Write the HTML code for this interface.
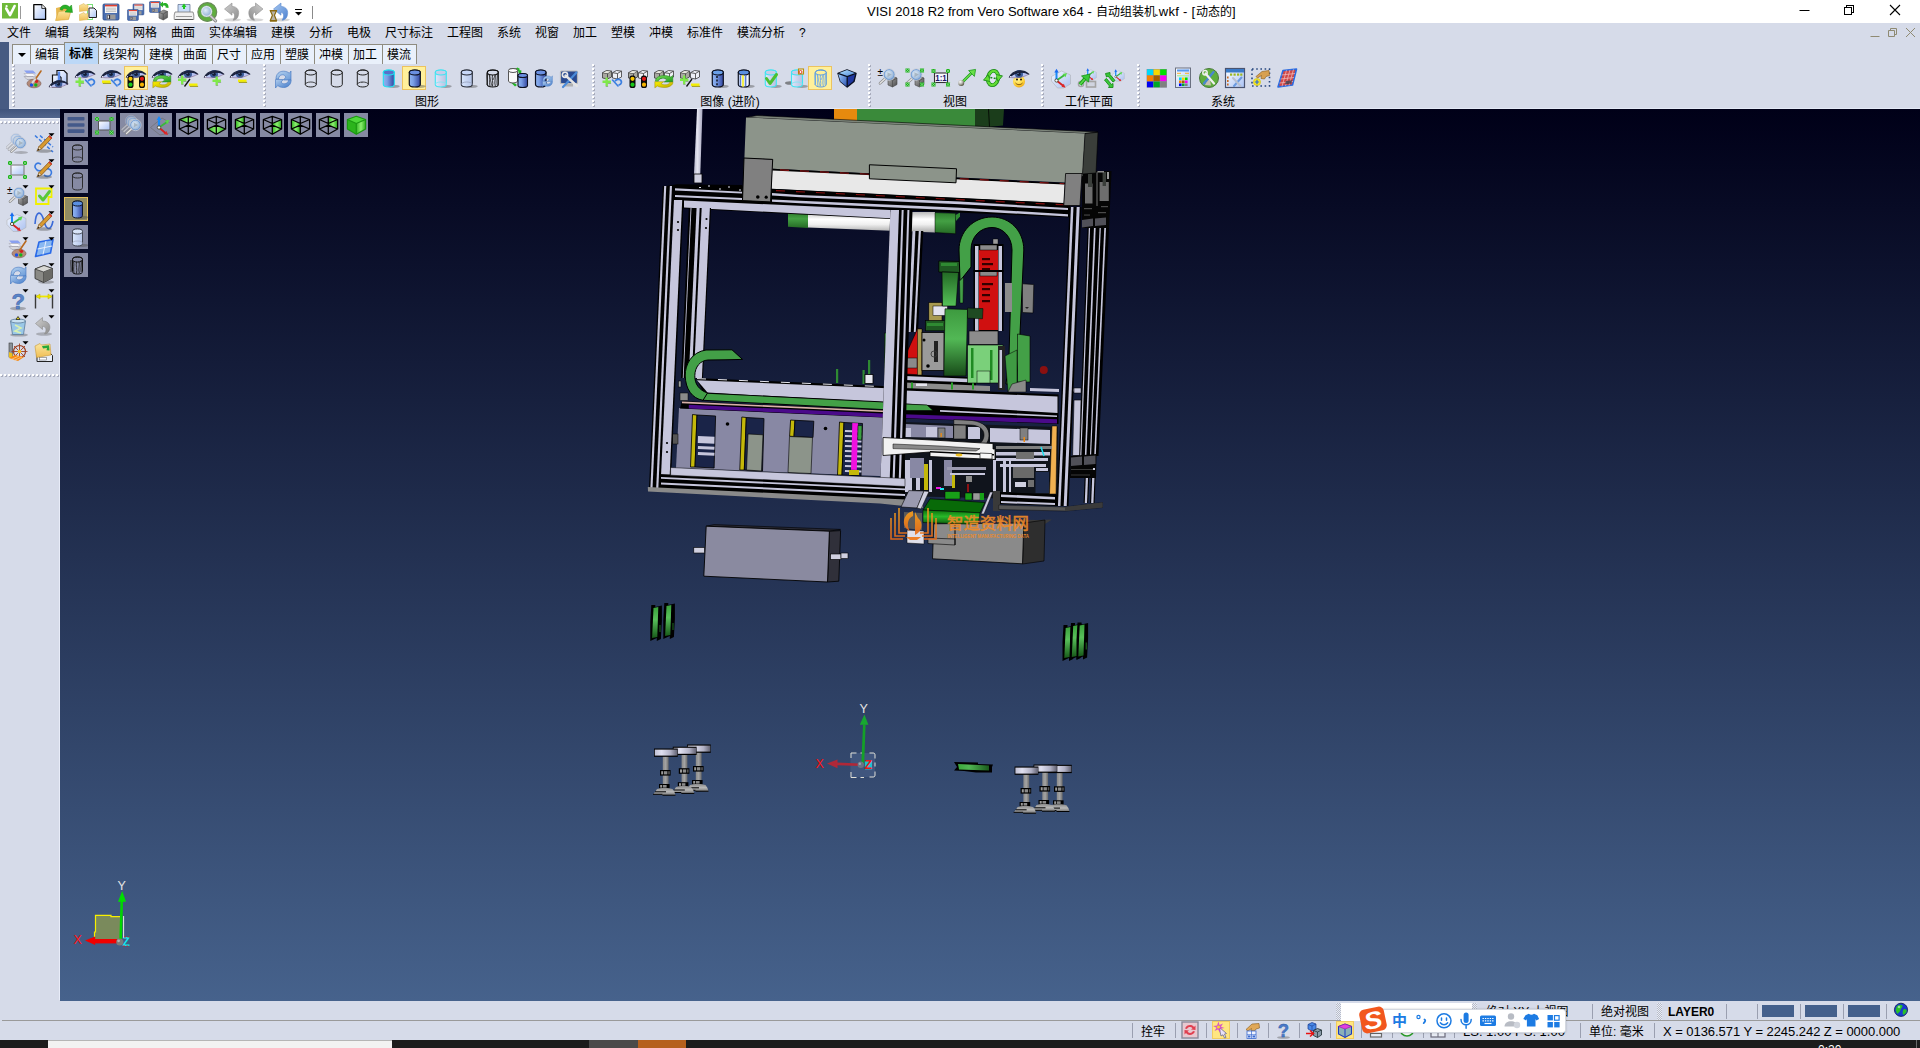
<!DOCTYPE html>
<html lang="zh-CN">
<head>
<meta charset="utf-8">
<title>VISI 2018 R2 from Vero Software x64 - 自动组装机.wkf - [动态的]</title>
<style>
*{box-sizing:border-box;margin:0;padding:0}
html,body{width:1920px;height:1048px;overflow:hidden;background:#d6dbe9}
body{position:relative;font-family:"Liberation Sans","Noto Sans CJK SC",sans-serif;font-size:12px;color:#000;line-height:1}
.abs{position:absolute}
#titlebar{position:absolute;left:0;top:0;width:1920px;height:23px;background:#fff}
#title{position:absolute;left:867px;top:4px;width:380px;height:16px;font-size:13px;line-height:16px;white-space:nowrap;color:#000}
#title span{display:inline-block;vertical-align:top}
#menubar{position:absolute;left:0;top:23px;width:1920px;height:20px;background:#d6dbe9}
#menubar span{position:absolute;top:3px;height:14px;line-height:14px;font-size:12px;white-space:nowrap}
#tabs{position:absolute;left:0;top:42px;width:1920px;height:22px}
.tab{position:absolute;top:2px;height:20px;background:#e9f0fb;border:1px solid #8f8c80;border-bottom:none;font-size:12px;line-height:20px;text-align:center;white-space:nowrap}
.tab.on{top:0;height:22px;background:#bcd8f7;font-weight:bold;line-height:22px}
#toolbar{position:absolute;left:12px;top:64px;width:1908px;height:44px;background:#d6dbe9}
.grip{position:absolute;top:64px;width:3px;height:44px;background:linear-gradient(#fff,#fff) 0 0/2px 2px repeat-y,linear-gradient(#a8acbc,#a8acbc) 1px 1px/2px 2px repeat-y;background-size:2px 2px,2px 2px;background-repeat:no-repeat;background-image:repeating-linear-gradient(to bottom,#fff 0 2px,transparent 2px 4px),repeating-linear-gradient(to bottom,transparent 0 1px,#a8acbc 1px 3px,transparent 3px 4px);background-size:2px 100%,2px 100%;background-position:0 0,1px 0}
.tl{position:absolute;top:96px;height:13px;line-height:13px;font-size:12px;white-space:nowrap;transform:translateX(-50%)}
.ic{position:absolute;width:24px;height:24px}
.hl{position:absolute;width:24px;height:24px;background:#fff09a;border:1px solid #ecc35f}
#leftstrip{position:absolute;left:0;top:42px;width:9px;height:67px;background:#465a82}
#leftband{position:absolute;left:0;top:109px;width:60px;height:9px;background:linear-gradient(#3f537c,#52668d)}
#leftpanel{position:absolute;left:0;top:118px;width:60px;height:883px;background:#d6dbe9}
.hgrip{position:absolute;left:0px;width:59px;height:3px;background-repeat:no-repeat;background-image:repeating-linear-gradient(to right,#fff 0 2px,transparent 2px 4px),repeating-linear-gradient(to right,transparent 0 1px,#a8acbc 1px 3px,transparent 3px 4px);background-size:100% 2px,100% 2px;background-position:0 0,0 1px}
#viewport{position:absolute;left:60px;top:109px;width:1860px;height:892px;background:linear-gradient(to bottom,#000018 0%,#46628c 100%);overflow:hidden}
.vb{position:absolute;width:24px;height:24px;background:#868aa3}
.vb.on{background:#928c62;border:1px solid #e6c25c}
#status{position:absolute;left:0;top:1001px;width:1920px;height:39px;background:#d6dbe9}
#status .line{position:absolute;left:2px;top:19px;width:1918px;height:1px;background:#9a9a9a}
#taskbar{position:absolute;left:0;top:1040px;width:1920px;height:8px;background:#1c1c1c}
.st{position:absolute;font-size:12px;line-height:14px;height:14px;white-space:nowrap}
.vsep{position:absolute;width:1px;background:#9a9fb0}
</style>
</head>
<body>
<div id="titlebar"></div>
<svg class="abs" style="left:0;top:0;width:320px;height:23px" viewBox="0 0 320 23"><rect x="2" y="3" width="16" height="15.5" fill="#6fba3a"/><path d="M6.2 8.5 L10 15.2 L14.6 6" stroke="#fff" stroke-width="2.6" fill="none" stroke-linecap="round" stroke-linejoin="round"/><circle cx="6.6" cy="6.2" r="1.1" fill="#fff"/><path d="M20.5 6v13" stroke="#9a9a9a" stroke-width="1"/><path d="M33.8 4.6h8l3.8 3.8v11H33.8z" fill="url(#gDoc)" stroke="#000" stroke-width="1.3" stroke-linejoin="round"/><path d="M41.8 4.6v3.8h3.8" fill="#fff" stroke="#000" stroke-width=".8"/><path d="M56 8 L62 6.5 L63.5 8 L70 7.5 L69 19 L56.5 20.5z" fill="#e8b850"/><path d="M55.5 20.5 L58.5 11.5 L71 10.5 L68.5 19.5z" fill="url(#gFold)" stroke="#d8a840" stroke-width=".6"/><path d="M60 9.5 C60.5 5 66 3.5 69.5 7 L71.5 5 L72.5 12.5 L65 12 L67.3 9.7 C65.5 8 63 8 62.3 10.2z" fill="#28b028" stroke="#188a18" stroke-width=".5"/><rect x="87.5" y="4.5" width="5" height="15" fill="none" stroke="#7ae07a" stroke-width="1"/><path d="M79.5 5.5 L84 3.5 L85 5 L88 4.5 L88 10.5 L79.5 11.5z" fill="url(#gFold)" stroke="#d8b050" stroke-width=".5"/><path d="M79.5 14.5 L84 12.5 L85 14 L88 13.5 L88 19.5 L79.5 20.5z" fill="url(#gFold)" stroke="#d8b050" stroke-width=".5"/><path d="M89 8h5l2.5 2.5v7H89z" fill="url(#gDoc)" stroke="#222" stroke-width="1"/><g transform="translate(103,4) scale(1)"><rect x="0" y="0" width="16" height="16" rx="1.2" fill="#4a6eb0" stroke="#2a4a88" stroke-width=".8"/><rect x="2" y="0.8" width="12" height="8.2" fill="#f4f4f4"/><rect x="2" y="0.8" width="12" height="1.6" fill="#e04030"/><path d="M3 4.2h10M3 5.8h10M3 7.4h10" stroke="#b8b8b8" stroke-width=".8"/><rect x="3.5" y="10.5" width="9" height="5" fill="#9a9a9a"/><rect x="4.5" y="11" width="2.6" height="4" fill="#2a2a3a"/><rect x="4.8" y="11.5" width="1.2" height="3" fill="#e8e8e8"/></g><g transform="translate(133,4) scale(0.68)"><rect x="0" y="0" width="16" height="16" rx="1.2" fill="#4a6eb0" stroke="#2a4a88" stroke-width=".8"/><rect x="2" y="0.8" width="12" height="8.2" fill="#f4f4f4"/><rect x="2" y="0.8" width="12" height="1.6" fill="#e04030"/><path d="M3 4.2h10M3 5.8h10M3 7.4h10" stroke="#b8b8b8" stroke-width=".8"/><rect x="3.5" y="10.5" width="9" height="5" fill="#9a9a9a"/><rect x="4.5" y="11" width="2.6" height="4" fill="#2a2a3a"/><rect x="4.8" y="11.5" width="1.2" height="3" fill="#e8e8e8"/></g><g transform="translate(127.5,9.5) scale(0.68)"><rect x="0" y="0" width="16" height="16" rx="1.2" fill="#4a6eb0" stroke="#2a4a88" stroke-width=".8"/><rect x="2" y="0.8" width="12" height="8.2" fill="#f4f4f4"/><rect x="2" y="0.8" width="12" height="1.6" fill="#e04030"/><path d="M3 4.2h10M3 5.8h10M3 7.4h10" stroke="#b8b8b8" stroke-width=".8"/><rect x="3.5" y="10.5" width="9" height="5" fill="#9a9a9a"/><rect x="4.5" y="11" width="2.6" height="4" fill="#2a2a3a"/><rect x="4.8" y="11.5" width="1.2" height="3" fill="#e8e8e8"/></g><g transform="translate(149.5,1.5) scale(0.68)"><rect x="0" y="0" width="16" height="16" rx="1.2" fill="#4a6eb0" stroke="#2a4a88" stroke-width=".8"/><rect x="2" y="0.8" width="12" height="8.2" fill="#f4f4f4"/><rect x="2" y="0.8" width="12" height="1.6" fill="#e04030"/><path d="M3 4.2h10M3 5.8h10M3 7.4h10" stroke="#b8b8b8" stroke-width=".8"/><rect x="3.5" y="10.5" width="9" height="5" fill="#9a9a9a"/><rect x="4.5" y="11" width="2.6" height="4" fill="#2a2a3a"/><rect x="4.8" y="11.5" width="1.2" height="3" fill="#e8e8e8"/></g><g transform="translate(159,10) scale(0.95)"><use href="#gcube"/></g><path d="M163 3.5 C166 2 169 4 168.5 8 L165.5 7.5 C166 6 165 5 163 5.8 L163 7.5 L159.5 4.5 L163 1.5z" fill="#28b028"/><path d="M178 4.5h12v8h-12z" fill="#c8dcf8" stroke="#5a6a8a" stroke-width=".7"/><path d="M181.5 7 L184 3.5 L186.5 7 L185 7 L185 9 L183 9 L183 7z" fill="#20c820"/><path d="M175 12h18l.8 3v4.5h-19.6V15z" fill="#f0f0f0" stroke="#7a7a7a" stroke-width=".8"/><path d="M176 16.5h16" stroke="#9a9a9a" stroke-width="1"/><path d="M175 19.5h18" stroke="#5a5a5a" stroke-width="1"/><circle cx="207.3" cy="12" r="9.4" fill="#5fae3e" stroke="#6a8a5a" stroke-width="1.2"/><path d="M209 14.5 L215.5 20.8" stroke="#8a8a8a" stroke-width="3.2" stroke-linecap="round"/><path d="M209 14.5 L215.5 20.8" stroke="#d0d0d0" stroke-width="1.6" stroke-linecap="round"/><circle cx="206.6" cy="11.4" r="5" fill="url(#gLens)" stroke="#e4e8f0" stroke-width="1.3"/><circle cx="206.6" cy="11.4" r="5.8" fill="none" stroke="#7a9a8a" stroke-width=".5"/><g transform="translate(224.5,3)"><ellipse cx="8" cy="16.8" rx="8.5" ry="1.6" fill="#000" opacity=".16"/><path d="M0 6 L7.5 0 L7.5 3.4 C13 3.6 15.5 8 13.5 13.5 C12.5 16 10.5 17.2 8.5 17.2 C11 13.5 10.5 9.6 7.5 9.2 L7.5 12.2z" fill="url(#gArrG)" stroke="#8e8e8e" stroke-width=".6"/></g><g transform="translate(263,3) scale(-1,1)"><ellipse cx="8" cy="16.8" rx="8.5" ry="1.6" fill="#000" opacity=".16"/><path d="M0 6 L7.5 0 L7.5 3.4 C13 3.6 15.5 8 13.5 13.5 C12.5 16 10.5 17.2 8.5 17.2 C11 13.5 10.5 9.6 7.5 9.2 L7.5 12.2z" fill="url(#gArrG)" stroke="#8e8e8e" stroke-width=".6"/></g><g transform="translate(273.5,3)"><ellipse cx="8" cy="16.8" rx="8.5" ry="1.6" fill="#000" opacity=".16"/><path d="M0 6 L7.5 0 L7.5 3.4 C13 3.6 15.5 8 13.5 13.5 C12.5 16 10.5 17.2 8.5 17.2 C11 13.5 10.5 9.6 7.5 9.2 L7.5 12.2z" fill="url(#gArrB)" stroke="#5a8ad0" stroke-width=".6"/></g><path d="M270.2 10.6h6.4l-2.2 4.6 2.2 5.6h-6.4l2.2-5.6z" fill="#b8b4a8" stroke="#8a6a10" stroke-width="1.2" stroke-linejoin="round"/><path d="M270 10.6h6.8M270 20.8h6.8" stroke="#8a6a10" stroke-width="1.4"/><path d="M295 9.5h7" stroke="#000" stroke-width="1"/><path d="M295 12h7l-3.5 3.5z" fill="#000"/><path d="M312.5 6v13" stroke="#8a8a8a" stroke-width="1"/></svg>
<div id="title"><span id="t1" style="width:229px">VISI 2018 R2 from Vero Software x64 - </span><span id="t2" style="font-size:12px;width:59px">自动组装机</span><span id="t3" style="width:41px;letter-spacing:.25px">.wkf - [</span><span id="t4" style="font-size:12px">动态的</span><span id="t5">]</span></div>
<svg class="abs" style="left:1780px;top:0;width:140px;height:23px" viewBox="0 0 140 23">
<path d="M19.5 10.5h10" stroke="#000" stroke-width="1" fill="none"/>
<path d="M64.5 7.5h7v7h-7z M66.5 7.5v-2h7v7h-2" stroke="#000" stroke-width="1" fill="none" shape-rendering="crispEdges"/>
<path d="M110 5l10 10M120 5l-10 10" stroke="#000" stroke-width="1.1" fill="none"/>
</svg>
<div id="menubar">
<span style="left:7px">文件</span>
<span style="left:45px">编辑</span>
<span style="left:83px">线架构</span>
<span style="left:133px">网格</span>
<span style="left:171px">曲面</span>
<span style="left:209px">实体编辑</span>
<span style="left:271px">建模</span>
<span style="left:309px">分析</span>
<span style="left:347px">电极</span>
<span style="left:385px">尺寸标注</span>
<span style="left:447px">工程图</span>
<span style="left:497px">系统</span>
<span style="left:535px">视窗</span>
<span style="left:573px">加工</span>
<span style="left:611px">塑模</span>
<span style="left:649px">冲模</span>
<span style="left:687px">标准件</span>
<span style="left:737px">模流分析</span>
<span style="left:799px">?</span>
</div>
<svg class="abs" style="left:1860px;top:23px;width:60px;height:20px" viewBox="0 0 60 20">
<path d="M10.5 13.5h9" stroke="#8f8a72" stroke-width="1" fill="none"/>
<path d="M28.5 7.5h6v6h-6z M30.5 7.5v-2h6v6h-2" stroke="#8f8a72" stroke-width="1" fill="none"/>
<path d="M46 5l9 9M55 5l-9 9" stroke="#8f8a72" stroke-width="1" fill="none"/>
</svg>
<div id="tabs">
<div class="tab" style="left:12px;width:19px"><svg width="8" height="4" viewBox="0 0 8 4" style="position:absolute;left:5px;top:8px"><path d="M0 0h8l-4 4z" fill="#000"/></svg></div>
<div class="tab" style="left:30px;width:35px;padding-right:1px">编辑</div>
<div class="tab on" style="left:64px;width:35px;padding-right:1px">标准</div>
<div class="tab" style="left:98px;width:47px;padding-right:1px">线架构</div>
<div class="tab" style="left:144px;width:35px;padding-right:1px">建模</div>
<div class="tab" style="left:178px;width:35px;padding-right:1px">曲面</div>
<div class="tab" style="left:212px;width:35px;padding-right:1px">尺寸</div>
<div class="tab" style="left:246px;width:35px;padding-right:1px">应用</div>
<div class="tab" style="left:280px;width:35px;padding-right:1px">塑膜</div>
<div class="tab" style="left:314px;width:35px;padding-right:1px">冲模</div>
<div class="tab" style="left:348px;width:35px;padding-right:1px">加工</div>
<div class="tab" style="left:382px;width:35px;padding-right:1px">模流</div>
</div>
<div id="toolbar"></div>
<div class="abs" style="left:0;top:108px;width:1920px;height:1px;background:#e4e9f6"></div>
<div class="grip" style="left:12px"></div>
<div class="grip" style="left:263px"></div>
<div class="grip" style="left:592px"></div>
<div class="grip" style="left:868px"></div>
<div class="grip" style="left:1041px"></div>
<div class="grip" style="left:1137px"></div>
<div class="tl" style="left:136.5px">属性/过滤器</div>
<div class="tl" style="left:427px">图形</div>
<div class="tl" style="left:730px">图像 (进阶)</div>
<div class="tl" style="left:955px">视图</div>
<div class="tl" style="left:1089px">工作平面</div>
<div class="tl" style="left:1223px">系统</div>
<div class="hl" style="left:124px;top:66px"></div>
<div class="hl" style="left:402px;top:66px"></div>
<div class="hl" style="left:808px;top:66px"></div>
<svg width="0" height="0" style="position:absolute">
<defs>
<linearGradient id="gCylB" x1="0" x2="1" y1="0" y2="0"><stop offset="0" stop-color="#8fb4f0"/><stop offset="0.35" stop-color="#7a9fe6"/><stop offset="1" stop-color="#3346a0"/></linearGradient>
<linearGradient id="gCylL" x1="0" x2="1" y1="0" y2="0"><stop offset="0" stop-color="#dfe6fa"/><stop offset="1" stop-color="#b9c0e0"/></linearGradient>
<linearGradient id="gCylW" x1="0" x2="1" y1="0" y2="0"><stop offset="0" stop-color="#d8e6fc"/><stop offset="1" stop-color="#b4c4e8"/></linearGradient>
<linearGradient id="gDoc" x1="0" x2="1" y1="0" y2="1"><stop offset="0" stop-color="#ffffff"/><stop offset="1" stop-color="#a9c2f5"/></linearGradient>
<linearGradient id="gFold" x1="0" x2="0" y1="0" y2="1"><stop offset="0" stop-color="#fbe6a0"/><stop offset="1" stop-color="#f0bf55"/></linearGradient>
<linearGradient id="gGray" x1="0" x2="1" y1="0" y2="1"><stop offset="0" stop-color="#b0b0b0"/><stop offset="1" stop-color="#4a4a4a"/></linearGradient>
<linearGradient id="gBlueA" x1="0" x2="1" y1="0" y2="1"><stop offset="0" stop-color="#b8d4f0"/><stop offset="1" stop-color="#6a9ad8"/></linearGradient><linearGradient id="gBlueB" x1="0" x2="1" y1="0" y2="1"><stop offset="0" stop-color="#b0ccec"/><stop offset="1" stop-color="#3f78c8"/></linearGradient>
<linearGradient id="gGrn" x1="0" x2="1" y1="0" y2="1"><stop offset="0" stop-color="#7be35a"/><stop offset="1" stop-color="#1e9a1e"/></linearGradient>
<linearGradient id="gGrn2" x1="0" x2="1" y1="0" y2="0"><stop offset="0" stop-color="#34b424"/><stop offset=".5" stop-color="#8cf070"/><stop offset="1" stop-color="#2cac1c"/></linearGradient><linearGradient id="gArrG" x1="0" x2="1" y1="0" y2="1"><stop offset="0" stop-color="#d0d0d0"/><stop offset="1" stop-color="#8c8c8c"/></linearGradient><linearGradient id="gArrB" x1="0" x2="1" y1="0" y2="1"><stop offset="0" stop-color="#a8c8f0"/><stop offset="1" stop-color="#4a80d0"/></linearGradient><linearGradient id="gYel" x1="0" x2="1" y1="0" y2="1"><stop offset="0" stop-color="#fff200"/><stop offset="1" stop-color="#b8a800"/></linearGradient>
<linearGradient id="gPlane" x1="0" x2="1" y1="0" y2="1"><stop offset="0" stop-color="#f4f7ff"/><stop offset="1" stop-color="#a9c0f0"/></linearGradient>
<radialGradient id="gLens" cx="0.4" cy="0.4" r="0.7"><stop offset="0" stop-color="#e0ecf8"/><stop offset="1" stop-color="#86a8d0"/></radialGradient>
<radialGradient id="gBall" cx="0.35" cy="0.3" r="0.8"><stop offset="0" stop-color="#ffffff"/><stop offset="0.5" stop-color="#b0b0a8"/><stop offset="1" stop-color="#3a3a20"/></radialGradient>
<radialGradient id="gSmile" cx="0.4" cy="0.3" r="0.8"><stop offset="0" stop-color="#fff7a0"/><stop offset="0.6" stop-color="#ffd63a"/><stop offset="1" stop-color="#e89a10"/></radialGradient>
<linearGradient id="gCubeT" x1="0" x2="1" y1="0" y2="1"><stop offset="0" stop-color="#b4e4ff"/><stop offset="1" stop-color="#4a84d8"/></linearGradient><linearGradient id="gCubeB" x1="0" x2="1" y1="0" y2="1"><stop offset="0" stop-color="#9fd0ff"/><stop offset="1" stop-color="#2a50b0"/></linearGradient>
<g id="eye"><path d="M0.3 8.2 C4.5 2 13.5 1 19.7 5.2 C15 8.6 6 9.6 0.3 8.2z" fill="#b8c4f4"/><circle cx="10" cy="5" r="4" fill="#3c5c98"/><circle cx="10" cy="5.2" r="1.8" fill="#141e38"/><circle cx="9" cy="3.8" r="0.9" fill="#a8c8ff"/><path d="M0.3 8.2 C4 1.4 13.5 -0.4 19.8 5.2 C14.5 1.8 6.5 2.8 0.3 8.2z" fill="#1b233e" stroke="#1b233e" stroke-width="1.1" stroke-linejoin="round"/><path d="M0.3 8.2 C6 9.5 14 8.8 19.7 5.2" stroke="#8a6a8a" stroke-width="0.6" fill="none"/><circle cx="1.6" cy="7.6" r=".7" fill="#fff"/></g>
<g id="plus"><path d="M3 0h2.4v3h3v2.4h-3v3H3v-3H0V3h3z" fill="#7fe84a"/><path d="M5.4 5.4h3.2v0.9H5.4zM3.2 8.4h2.4v0.8H3.2z" fill="#5a8a3a" opacity=".7"/></g>
<g id="minus"><rect x="0" y="0" width="8.5" height="2.4" fill="#f5f000"/><rect x="0.8" y="2.4" width="8.3" height="0.9" fill="#9a9400"/></g>
<g id="undoB"><path d="M0.5 0.5 L6 6.5" stroke="#3b7fe0" stroke-width="1.6" stroke-linecap="round" fill="none"/><path d="M3.5 1.2 C6 -1.5 10 0 9.3 3.4 C9 4.6 8 5.2 7.2 5.3" stroke="#3b7fe0" stroke-width="1.8" fill="none" stroke-linecap="round"/></g>
<g id="tl"><rect x="0" y="0" width="6" height="12.5" rx="2.6" fill="#0a0a0a"/></g>
<g id="refreshGY"><path d="M5 13 C5 8 8 5.2 12.5 5.2 C15 5.2 17 6 18.3 7.2 L20 5 L20 14 L12.5 14 L14.8 11.2 C14 9.5 13 8.8 11.5 8.8 C9 8.8 7.8 10.5 7.5 13z" fill="url(#gGrn)" stroke="#1c7a1c" stroke-width="0.5"/><path d="M20.2 14.2 C20 18.5 17 21.5 12.5 21.5 C10 21.5 8 20.8 6.8 19.5 L4.5 22 L4.5 13.5 L12.3 13.5 L10 16 C10.8 17.3 12 17.8 13.2 17.8 C15.8 17.8 17.2 16.2 17.5 14.2z" fill="url(#gYel)" stroke="#9a8a00" stroke-width="0.5"/></g>
<g id="refreshB"><path d="M5 13 C5 8 8 5.2 12.5 5.2 C15 5.2 17 6 18.3 7.2 L20 5 L20 14 L12.5 14 L14.8 11.2 C14 9.5 13 8.8 11.5 8.8 C9 8.8 7.8 10.5 7.5 13z" fill="url(#gBlueA)" stroke="#3f74c0" stroke-width="0.6"/><path d="M20.2 14.2 C20 18.5 17 21.5 12.5 21.5 C10 21.5 8 20.8 6.8 19.5 L4.5 22 L4.5 13.5 L12.3 13.5 L10 16 C10.8 17.3 12 17.8 13.2 17.8 C15.8 17.8 17.2 16.2 17.5 14.2z" fill="url(#gBlueB)" stroke="#3f74c0" stroke-width="0.6"/></g>
<g id="cubes"><path d="M0.5 3.2 L4.5 1 L9.5 1.6 L9.5 7.5 L5.5 9.5 L0.5 8.5z" fill="#a8a8a0" stroke="#3a3a3a" stroke-width="0.8"/><path d="M0.5 3.2 L5.5 4 L9.5 1.6 M5.5 4 V9.5" stroke="#3a3a3a" stroke-width="0.8" fill="none"/><path d="M1.2 3.3 L4.6 1.4 L8.8 1.9 L5.5 3.7z" fill="#e8e8e0"/><path d="M10.5 3.2 L14.5 1 L19.5 1.6 L19.5 7.5 L15.5 9.5 L10.5 8.5z" fill="#eef0f6" stroke="#3a3a3a" stroke-width="0.8"/><path d="M10.5 3.2 L15.5 4 L19.5 1.6 M15.5 4 V9.5" stroke="#3a3a3a" stroke-width="0.8" fill="none"/></g>
<g id="mag"><path d="M7 9 L1 14.5" stroke="#8c8c8c" stroke-width="2.6" stroke-linecap="round"/><path d="M7 9 L1 14.5" stroke="#e6e6e6" stroke-width="1.2" stroke-linecap="round"/><circle cx="10" cy="6" r="5" fill="url(#gLens)" stroke="#6a9ad8" stroke-width="1"/><circle cx="10" cy="6" r="5.7" fill="none" stroke="#c9ccd4" stroke-width="0.7"/><path d="M8.3 3.6 L12.6 6 L8.3 8.6z" fill="#9aa8b4" opacity=".75"/></g>
<g id="gcorner"><path d="M0 0h4v4h-4z" fill="#22b022"/><path d="M0 0l4 4M4 0l-4 4" stroke="#8fe08f" stroke-width="0.7"/></g>
<g id="gcube"><path d="M0 2.5 L5 0 L9 1.5 L9 8 L4.5 10.5 L0 8.5z" fill="url(#gGray)" stroke="#444" stroke-width="0.6"/><path d="M0 2.5 L4.5 4.2 L9 1.5 M4.5 4.2 V10.5" stroke="#444" stroke-width="0.6" fill="none"/></g>
</defs></svg>
<svg class="ic" style="left:21px;top:66px;width:24px;height:24px" viewBox="0 0 24 24"><path d="M3 4.5h9l3 3H6z" fill="#8aa0f0"/><path d="M3 7.5h9l3 3H6z" fill="#f4f4f8" stroke="#9a9aa8" stroke-width=".5"/><path d="M3 10.5h9l3 3H6z" fill="#d8d8de" stroke="#8a8a98" stroke-width=".5"/><ellipse cx="13" cy="17.5" rx="7" ry="4.3" fill="#b48a78" stroke="#7a5a50" stroke-width=".6"/><circle cx="15.5" cy="15.3" r="1.7" fill="#d02020"/><circle cx="10.5" cy="19" r="1.7" fill="#1a50e8"/><circle cx="14.8" cy="19" r="1.7" fill="#18b018"/><path d="M20 5 L13.5 14.5" stroke="#b86a20" stroke-width="1.6" stroke-linecap="round"/><path d="M14.2 13.2 L11.5 16.5" stroke="#d8d8d8" stroke-width="2" stroke-linecap="round"/></svg>
<svg class="ic" style="left:47px;top:66px;width:24px;height:24px" viewBox="0 0 24 24"><path d="M10 4.5h7l3 3v11H10z" fill="url(#gDoc)" stroke="#111" stroke-width="1.2"/><path d="M5.5 9h6l2.5 2.5v9.5H5.5z" fill="url(#gDoc)" stroke="#111" stroke-width="1.2"/><path d="M12 5.5v13h6" fill="none" stroke="#5a8ae8" stroke-width="2.4"/><g transform="translate(2,13) scale(0.95)"><use href="#eye"/></g></svg>
<svg class="ic" style="left:73px;top:66px;width:24px;height:24px" viewBox="0 0 24 24"><use href="#eye" x="2" y="3"/><use href="#plus" x="2.5" y="11.5"/><use href="#undoB" x="12" y="13.5"/></svg>
<svg class="ic" style="left:99px;top:66px;width:24px;height:24px" viewBox="0 0 24 24"><use href="#eye" x="2" y="3"/><use href="#minus" x="3" y="14.5"/><use href="#undoB" x="12" y="13.5"/></svg>
<svg class="ic" style="left:124px;top:66px;width:24px;height:24px" viewBox="0 0 24 24"><use href="#eye" x="2" y="3"/><use href="#tl" x="3.5" y="9.5"/><circle cx="6.5" cy="12.8" r="2.1" fill="#f5c400"/><circle cx="6.5" cy="18.7" r="2.1" fill="#18c818"/><use href="#tl" x="15" y="9.5"/><circle cx="18" cy="12.8" r="2.1" fill="#e01818"/><circle cx="18" cy="18.7" r="2.1" fill="#f5b400"/></svg>
<svg class="ic" style="left:150px;top:66px;width:24px;height:24px" viewBox="0 0 24 24"><use href="#eye" x="2" y="3"/><g transform="translate(-2.4,5.8) scale(1.16,0.73)"><use href="#refreshGY"/></g></svg>
<svg class="ic" style="left:176px;top:66px;width:24px;height:24px" viewBox="0 0 24 24"><use href="#eye" x="2" y="3"/><use href="#plus" x="2" y="9.5"/><path d="M8.5 20.5 L14 13" stroke="#111" stroke-width="1.3"/><use href="#minus" x="13" y="17.5"/></svg>
<svg class="ic" style="left:202px;top:66px;width:24px;height:24px" viewBox="0 0 24 24"><use href="#eye" x="2" y="3"/><use href="#plus" x="10.5" y="10.5"/></svg>
<svg class="ic" style="left:228px;top:66px;width:24px;height:24px" viewBox="0 0 24 24"><use href="#eye" x="2" y="3"/><use href="#minus" x="10" y="13.5"/></svg>
<svg class="ic" style="left:271px;top:66px;width:24px;height:24px" viewBox="0 0 24 24"><use href="#refreshB"/></svg>
<svg class="ic" style="left:298px;top:66px;width:24px;height:24px" viewBox="0 0 24 24"><path d="M7.3 6.5 V18.5 A5.5 2.5 0 0 0 18.3 18.5 V6.5 A5.5 2.5 0 0 0 7.3 6.5z" fill="none" stroke="#222" stroke-width="1"/><ellipse cx="12.8" cy="6.5" rx="5.5" ry="2.5" fill="none" stroke="#222" stroke-width="1"/><path d="M7.3 18.5 A5.5 2.5 0 0 1 18.3 18.5" fill="none" stroke="#222" stroke-width="0.8"/></svg>
<svg class="ic" style="left:324px;top:66px;width:24px;height:24px" viewBox="0 0 24 24"><path d="M7.3 6.5 V18.5 A5.5 2.5 0 0 0 18.3 18.5 V6.5 A5.5 2.5 0 0 0 7.3 6.5z" fill="none" stroke="#222" stroke-width="1"/><ellipse cx="12.8" cy="6.5" rx="5.5" ry="2.5" fill="none" stroke="#222" stroke-width="1"/></svg>
<svg class="ic" style="left:350px;top:66px;width:24px;height:24px" viewBox="0 0 24 24"><path d="M7.3 6.5 V18.5 A5.5 2.5 0 0 0 18.3 18.5 V6.5 A5.5 2.5 0 0 0 7.3 6.5z" fill="none" stroke="#222" stroke-width="1"/><ellipse cx="12.8" cy="6.5" rx="5.5" ry="2.5" fill="none" stroke="#222" stroke-width="1"/><path d="M7.3 18.5 A5.5 2.5 0 0 1 18.3 18.5" fill="none" stroke="#222" stroke-width="0.8"/><circle cx="12" cy="16.2" r="0.5" fill="#222"/></svg>
<svg class="ic" style="left:376px;top:66px;width:24px;height:24px" viewBox="0 0 24 24"><ellipse cx="17.8" cy="20.3" rx="6" ry="1.6" fill="#555" opacity=".45"/><path d="M7.3 6.5 V18.5 A5.5 2.5 0 0 0 18.3 18.5 V6.5 A5.5 2.5 0 0 0 7.3 6.5z" fill="url(#gCylB)" stroke="#1fe0f0" stroke-width="1.1"/><ellipse cx="12.8" cy="6.5" rx="5.5" ry="2.5" fill="#5a6fc8" stroke="#1fe0f0" stroke-width="1.1"/></svg>
<svg class="ic" style="left:402px;top:66px;width:24px;height:24px" viewBox="0 0 24 24"><ellipse cx="17.8" cy="20.3" rx="6" ry="1.6" fill="#555" opacity=".45"/><path d="M7.3 6.5 V18.5 A5.5 2.5 0 0 0 18.3 18.5 V6.5 A5.5 2.5 0 0 0 7.3 6.5z" fill="url(#gCylB)" stroke="#0c1020" stroke-width="1.2"/><ellipse cx="12.8" cy="6.5" rx="5.5" ry="2.5" fill="#6a8fe0" stroke="#0c1020" stroke-width="1.2"/></svg>
<svg class="ic" style="left:428px;top:66px;width:24px;height:24px" viewBox="0 0 24 24"><ellipse cx="17.8" cy="20.3" rx="6" ry="1.6" fill="#555" opacity=".45"/><path d="M7.3 6.5 V18.5 A5.5 2.5 0 0 0 18.3 18.5 V6.5 A5.5 2.5 0 0 0 7.3 6.5z" fill="url(#gCylL)" stroke="#3fe4f2" stroke-width="1.1"/><ellipse cx="12.8" cy="6.5" rx="5.5" ry="2.5" fill="#c8cce8" stroke="#3fe4f2" stroke-width="1.1"/><path d="M7.3 18.5 A5.5 2.5 0 0 1 18.3 18.5" fill="none" stroke="#7fe8f2" stroke-width="0.8800000000000001"/></svg>
<svg class="ic" style="left:454px;top:66px;width:24px;height:24px" viewBox="0 0 24 24"><ellipse cx="17.8" cy="20.3" rx="6" ry="1.6" fill="#555" opacity=".45"/><path d="M7.3 6.5 V18.5 A5.5 2.5 0 0 0 18.3 18.5 V6.5 A5.5 2.5 0 0 0 7.3 6.5z" fill="url(#gCylW)" stroke="#2a2e3a" stroke-width="1.1"/><ellipse cx="12.8" cy="6.5" rx="5.5" ry="2.5" fill="#c8d8f8" stroke="#2a2e3a" stroke-width="1.1"/><path d="M7.3 18.5 A5.5 2.5 0 0 1 18.3 18.5" fill="none" stroke="#9aa4c0" stroke-width="0.8800000000000001"/></svg>
<svg class="ic" style="left:480px;top:66px;width:24px;height:24px" viewBox="0 0 24 24"><path d="M7.3 6.5 V18.5 A5.5 2.5 0 0 0 18.3 18.5 V6.5 A5.5 2.5 0 0 0 7.3 6.5z" fill="none" stroke="#111" stroke-width="1.1"/><ellipse cx="12.8" cy="6.5" rx="5.5" ry="2.5" fill="none" stroke="#111" stroke-width="1.1"/><path d="M7 7 C6.5 11 7.5 15 7 19 M9.5 8.5 C10.5 12 9 15 10 20.5 M12.5 9 C11.5 13 13.5 16 12.5 20.5 M15 8.5 C16 12 14 16 15.3 20 M17.2 7 C17.8 11 16.5 15 17.2 19" stroke="#222" stroke-width="0.9" fill="none"/><path d="M9 8.3 L12 20 M15.5 8.5 L13 14" stroke="#222" stroke-width="0.7" fill="none"/></svg>
<svg class="ic" style="left:506px;top:66px;width:24px;height:24px" viewBox="0 0 24 24"><path d="M8 3.5 L11.5 1.5 L14 3 L13 4 L15.5 4.5 L15 8 L12 7 L13 6 L11.5 5z" fill="#22b822"/><path d="M4.5 16 L9 20.5 L11 19 L9 17.5z" fill="#22b822"/><path d="M2.5 4.5 V15.0 A4.5 2 0 0 0 11.5 15.0 V4.5 A4.5 2 0 0 0 2.5 4.5z" fill="#fafafa" stroke="#555" stroke-width="1"/><ellipse cx="7.0" cy="4.5" rx="4.5" ry="2" fill="#fff" stroke="#555" stroke-width="1"/><path d="M12 9.5 V19.5 A4.75 2 0 0 0 21.5 19.5 V9.5 A4.75 2 0 0 0 12 9.5z" fill="url(#gCylB)" stroke="#0c1020" stroke-width="1.1"/><ellipse cx="16.75" cy="9.5" rx="4.75" ry="2" fill="#6a8fe0" stroke="#0c1020" stroke-width="1.1"/></svg>
<svg class="ic" style="left:532px;top:66px;width:24px;height:24px" viewBox="0 0 24 24"><path d="M3.5 6.5 V18.5 A5.25 2.5 0 0 0 14.0 18.5 V6.5 A5.25 2.5 0 0 0 3.5 6.5z" fill="url(#gCylB)" stroke="#0c1020" stroke-width="1.2"/><ellipse cx="8.75" cy="6.5" rx="5.25" ry="2.5" fill="#6a8fe0" stroke="#0c1020" stroke-width="1.2"/><g transform="translate(7.6,6.6) scale(0.64)"><use href="#refreshB"/></g></svg>
<svg class="ic" style="left:558px;top:66px;width:24px;height:24px" viewBox="0 0 24 24"><rect x="2.5" y="5" width="17" height="12.5" rx="1" fill="#2a4a90" stroke="#b8b8b8" stroke-width="1.2"/><rect x="7" y="18" width="8" height="2.5" fill="#b0b0b0"/><path d="M5 21 L18.5 6.5" stroke="#4a8ad8" stroke-width="2.2" stroke-linecap="round"/><path d="M7.5 9.5 L19 20" stroke="#e4e4e4" stroke-width="2.4" stroke-linecap="round"/><circle cx="7" cy="8.8" r="2.6" fill="none" stroke="#e8e8e8" stroke-width="1.6"/></svg>
<svg class="ic" style="left:600px;top:66px;width:24px;height:24px" viewBox="0 0 24 24"><use href="#cubes" x="2" y="3.5"/><use href="#plus" x="2.5" y="11.5"/><use href="#undoB" x="12" y="13.5"/></svg>
<svg class="ic" style="left:626px;top:66px;width:24px;height:24px" viewBox="0 0 24 24"><use href="#cubes" x="2" y="3.5"/><use href="#tl" x="3.5" y="9.5"/><circle cx="6.5" cy="12.8" r="2.1" fill="#f5c400"/><circle cx="6.5" cy="18.7" r="2.1" fill="#18c818"/><use href="#tl" x="15" y="9.5"/><circle cx="18" cy="12.8" r="2.1" fill="#e01818"/><circle cx="18" cy="18.7" r="2.1" fill="#f5b400"/></svg>
<svg class="ic" style="left:652px;top:66px;width:24px;height:24px" viewBox="0 0 24 24"><use href="#cubes" x="2" y="3.5"/><g transform="translate(-2.4,5.8) scale(1.16,0.73)"><use href="#refreshGY"/></g></svg>
<svg class="ic" style="left:678px;top:66px;width:24px;height:24px" viewBox="0 0 24 24"><use href="#cubes" x="2" y="3.5"/><use href="#plus" x="2" y="9.5"/><path d="M8.5 20.5 L14 13" stroke="#111" stroke-width="1.3"/><use href="#minus" x="13" y="17.5"/></svg>
<svg class="ic" style="left:705px;top:66px;width:24px;height:24px" viewBox="0 0 24 24"><ellipse cx="17.8" cy="20.3" rx="6" ry="1.6" fill="#555" opacity=".45"/><path d="M7.3 6.5 V18.5 A5.5 2.5 0 0 0 18.3 18.5 V6.5 A5.5 2.5 0 0 0 7.3 6.5z" fill="url(#gCylB)" stroke="#0c1020" stroke-width="1.2"/><ellipse cx="12.8" cy="6.5" rx="5.5" ry="2.5" fill="#6a9fe8" stroke="#0c1020" stroke-width="1.2"/><path d="M12 10v10" stroke="#000" stroke-width="1.3" stroke-dasharray="2 1.6"/></svg>
<svg class="ic" style="left:731px;top:66px;width:24px;height:24px" viewBox="0 0 24 24"><ellipse cx="17.8" cy="20.3" rx="6" ry="1.6" fill="#555" opacity=".45"/><path d="M7.3 6.5 V18.5 A5.5 2.5 0 0 0 18.3 18.5 V6.5 A5.5 2.5 0 0 0 7.3 6.5z" fill="#f4f6ff" stroke="#0c1020" stroke-width="1.2"/><ellipse cx="12.8" cy="6.5" rx="5.5" ry="2.5" fill="#5a8fe0" stroke="#0c1020" stroke-width="1.2"/><rect x="8.6" y="9.2" width="1.6" height="11" fill="#5a7fd0"/><rect x="11.2" y="9.2" width="1.6" height="11.5" fill="#f5f020"/><rect x="13.8" y="9.2" width="1.6" height="11" fill="#5a7fd0"/></svg>
<svg class="ic" style="left:758px;top:66px;width:24px;height:24px" viewBox="0 0 24 24"><ellipse cx="17.8" cy="20.3" rx="6" ry="1.6" fill="#555" opacity=".45"/><path d="M7.3 6.5 V18.5 A5.5 2.5 0 0 0 18.3 18.5 V6.5 A5.5 2.5 0 0 0 7.3 6.5z" fill="url(#gCylL)" stroke="#3fe4f2" stroke-width="1.1"/><ellipse cx="12.8" cy="6.5" rx="5.5" ry="2.5" fill="#c8cce8" stroke="#3fe4f2" stroke-width="1.1"/><path d="M8.5 12.5 L12 17.5 L18.5 8.5" stroke="#4cc030" stroke-width="3" fill="none" stroke-linecap="round" stroke-linejoin="round"/></svg>
<svg class="ic" style="left:784px;top:66px;width:24px;height:24px" viewBox="0 0 24 24"><ellipse cx="6" cy="17" rx="5" ry="1.8" fill="#444" opacity=".6"/><ellipse cx="18.0" cy="20.3" rx="6" ry="1.6" fill="#555" opacity=".45"/><path d="M7.5 6.5 V18.5 A5.5 2.5 0 0 0 18.5 18.5 V6.5 A5.5 2.5 0 0 0 7.5 6.5z" fill="url(#gCylL)" stroke="#3fe4f2" stroke-width="1.1"/><ellipse cx="13.0" cy="6.5" rx="5.5" ry="2.5" fill="#c8cce8" stroke="#3fe4f2" stroke-width="1.1"/><path d="M7.5 18.5 A5.5 2.5 0 0 1 18.5 18.5" fill="none" stroke="#7fe8f2" stroke-width="0.8800000000000001"/><rect x="14.5" y="3" width="5" height="5" fill="#f8f0f0" stroke="#b8900a" stroke-width="1.1"/><circle cx="16.5" cy="6" r="1.5" fill="none" stroke="#e03010" stroke-width=".9"/></svg>
<svg class="ic" style="left:808px;top:66px;width:24px;height:24px" viewBox="0 0 24 24"><path d="M7.3 6.5 V18.5 A5.5 2.5 0 0 0 18.3 18.5 V6.5 A5.5 2.5 0 0 0 7.3 6.5z" fill="none" stroke="#5a9ae0" stroke-width="1"/><ellipse cx="12.8" cy="6.5" rx="5.5" ry="2.5" fill="none" stroke="#5a9ae0" stroke-width="1"/><path d="M7 7 C6.5 11 7.5 15 7 19 M9.5 8.5 C10.5 12 9 15 10 20.5 M12.5 9 C11.5 13 13.5 16 12.5 20.5 M15 8.5 C16 12 14 16 15.3 20 M17.2 7 C17.8 11 16.5 15 17.2 19" stroke="#6aa8e8" stroke-width="0.9" fill="none"/><path d="M9 8.3 L12 20 M15.5 8.5 L13 14" stroke="#6aa8e8" stroke-width="0.7" fill="none"/></svg>
<svg class="ic" style="left:835px;top:66px;width:24px;height:24px" viewBox="0 0 24 24"><path d="M3 7.4 L12 4 L21 7.4 L19 15.5 L12.2 21 L5.5 15.5z" fill="#2038a0" stroke="#0a1020" stroke-width="1.4" stroke-linejoin="round"/><path d="M3 7.4 L12 4 L21 7.4 L12.2 10.5z" fill="url(#gCubeT)"/><path d="M3 7.4 L12.2 10.5 L12.2 21 L5.5 15.5z" fill="url(#gCubeB)"/><path d="M3 7.4 L12.2 10.5 L21 7.4 M12.2 10.5 V21" stroke="#0a1020" stroke-width="1.3" fill="none"/></svg>
<svg class="ic" style="left:876px;top:66px;width:24px;height:24px" viewBox="0 0 24 24"><text x="1.6" y="9.6" font-family="Liberation Sans,sans-serif" font-size="10" fill="#000">±</text><use href="#gcube" x="12" y="10.5"/><g transform="translate(3,2.5) scale(1.02)"><use href="#mag"/></g></svg>
<svg class="ic" style="left:903px;top:66px;width:24px;height:24px" viewBox="0 0 24 24"><use href="#gcube" x="12" y="10.5"/><g transform="translate(3,2.5) scale(1.02)"><use href="#mag"/></g><use href="#gcorner" x="2.5" y="2.5"/><use href="#gcorner" x="17" y="2.5"/><use href="#gcorner" x="2.5" y="16.5"/><use href="#gcorner" x="17" y="16.5"/></svg>
<svg class="ic" style="left:929px;top:66px;width:24px;height:24px" viewBox="0 0 24 24"><rect x="5.5" y="7" width="13" height="9.5" fill="#f4f6ff" stroke="#333" stroke-width="1.1"/><use href="#gcorner" x="2.5" y="3"/><use href="#gcorner" x="17" y="3"/><use href="#gcorner" x="2.5" y="16.5"/><use href="#gcorner" x="17" y="16.5"/><text x="12" y="14.9" text-anchor="middle" font-family="Liberation Sans,sans-serif" font-size="8.6" font-weight="bold" fill="#20106a" textLength="11.5" lengthAdjust="spacingAndGlyphs">1:1</text></svg>
<svg class="ic" style="left:955px;top:66px;width:24px;height:24px" viewBox="0 0 24 24"><path d="M7 16.5 L17 6.5" stroke="#1c9a1c" stroke-width="2.6"/><path d="M7 16.5 L17 6.5" stroke="#6ae04a" stroke-width="1.2"/><path d="M13.6 4.6 L20.6 3.4 L19.4 10.4z" fill="#6ae04a" stroke="#1c9a1c" stroke-width=".8"/><circle cx="6.2" cy="17" r="3" fill="url(#gBall)"/></svg>
<svg class="ic" style="left:981px;top:66px;width:24px;height:24px" viewBox="0 0 24 24"><g transform="translate(1.2 1.2) scale(.9) rotate(12 12 12)"><ellipse cx="12" cy="12" rx="5.6" ry="8" fill="none" stroke="#1c8a1c" stroke-width="4.4"/><ellipse cx="12" cy="12" rx="5.6" ry="8" fill="none" stroke="#62dc34" stroke-width="2.6"/><path d="M13.5 7.5 L21.8 7.5 L18.2 14.5z" fill="#62dc34" stroke="#1c8a1c" stroke-width=".9"/><path d="M10.5 16.5 L2.2 16.5 L5.8 9.5z" fill="#62dc34" stroke="#1c8a1c" stroke-width=".9"/><ellipse cx="12" cy="12" rx="3.4" ry="5.8" fill="#dfe3f0"/><rect x="9" y="11.2" width="6" height="1.6" fill="#1c8a1c"/><rect x="11.2" y="10.2" width="1.6" height="3.6" fill="#dfe3f0"/></g></svg>
<svg class="ic" style="left:1007px;top:66px;width:24px;height:24px" viewBox="0 0 24 24"><circle cx="12" cy="15.5" r="6" fill="url(#gSmile)"/><circle cx="10" cy="13.6" r="1" fill="#201000"/><circle cx="14" cy="13.6" r="1" fill="#201000"/><path d="M8.5 17 C10.5 19.2 13.5 19.2 15.5 17" stroke="#6a3a00" stroke-width=".8" fill="none"/><use href="#eye" x="2" y="3"/></svg>
<svg class="ic" style="left:1050px;top:66px;width:24px;height:24px" viewBox="0 0 24 24"><g transform="translate(0.5,0.5) scale(1)"><path d="M1 10 L11 4.5 L20 8.5 L20 17.5 L13 21.5 L7 21.5 L1 14.5z" fill="url(#gPlane)" stroke="#aaa" stroke-width=".5"/><path d="M6 14 L14 8.5" stroke="#3ab83a" stroke-width="1.8"/><path d="M12 7.5 L16.5 6.5 L15 10.8z" fill="#5ad84a"/><path d="M6 14 L13 19.5" stroke="#d82020" stroke-width="1.8"/><path d="M11 20.3 L15 21.3 L13.3 17.2z" fill="#e02828"/><path d="M6 13.5 V5" stroke="#1a8af8" stroke-width="2"/><path d="M3.8 6 L6 2.2 L8.2 6z" fill="#1a6af0"/><circle cx="6" cy="14" r="1.6" fill="#fff" stroke="#3a3a20" stroke-width=".8"/></g></svg>
<svg class="ic" style="left:1076px;top:66px;width:24px;height:24px" viewBox="0 0 24 24"><g transform="translate(8,1) scale(0.62)"><path d="M1 10 L11 4.5 L20 8.5 L20 17.5 L13 21.5 L7 21.5 L1 14.5z" fill="url(#gPlane)" stroke="#aaa" stroke-width=".5"/><path d="M6 14 L14 8.5" stroke="#3ab83a" stroke-width="1.8"/><path d="M12 7.5 L16.5 6.5 L15 10.8z" fill="#5ad84a"/><path d="M6 14 L13 19.5" stroke="#d82020" stroke-width="1.8"/><path d="M11 20.3 L15 21.3 L13.3 17.2z" fill="#e02828"/><path d="M6 13.5 V5" stroke="#1a8af8" stroke-width="2"/><path d="M3.8 6 L6 2.2 L8.2 6z" fill="#1a6af0"/><circle cx="6" cy="14" r="1.6" fill="#fff" stroke="#3a3a20" stroke-width=".8"/></g><rect x="10.5" y="15.5" width="9" height="5.5" fill="#d0d4e0" stroke="#a4a4a4" stroke-width="1.6"/><circle cx="5" cy="18" r="2.6" fill="none" stroke="#a4a4a4" stroke-width="1.4"/><path d="M4 18.5 L10 11.5" stroke="#18a018" stroke-width="3.6"/><path d="M4 18.5 L10 11.5" stroke="#5ad84a" stroke-width="1.6"/><path d="M5.5 10 L14 8 L12.5 16z" fill="#3ac83a" stroke="#18901a" stroke-width=".8"/></svg>
<svg class="ic" style="left:1102px;top:66px;width:24px;height:24px" viewBox="0 0 24 24"><g transform="translate(10,2) scale(0.62)"><path d="M1 10 L11 4.5 L20 8.5 L20 17.5 L13 21.5 L7 21.5 L1 14.5z" fill="url(#gPlane)" stroke="#aaa" stroke-width=".5"/><path d="M6 14 L14 8.5" stroke="#3ab83a" stroke-width="1.8"/><path d="M12 7.5 L16.5 6.5 L15 10.8z" fill="#5ad84a"/><path d="M6 14 L13 19.5" stroke="#d82020" stroke-width="1.8"/><path d="M11 20.3 L15 21.3 L13.3 17.2z" fill="#e02828"/><path d="M6 13.5 V5" stroke="#1a8af8" stroke-width="2"/><path d="M3.8 6 L6 2.2 L8.2 6z" fill="#1a6af0"/><circle cx="6" cy="14" r="1.6" fill="#fff" stroke="#3a3a20" stroke-width=".8"/></g><path d="M3.5 7.5 L8 6.5 L8 8.5 L13 14.5 L11 16 L6 10 L4.5 11z" fill="#3ac83a" stroke="#18901a" stroke-width=".9"/><path d="M11 21.5 L6.5 21.5 L7.5 20 L2.5 14 L4.5 12.5 L9.5 18.5 L11 17.5z" fill="#3ac83a" stroke="#18901a" stroke-width=".9"/></svg>
<svg class="ic" style="left:1145px;top:66px;width:24px;height:24px" viewBox="0 0 24 24"><rect x="1.6" y="3" width="20.4" height="18.6" fill="#8a8e9a"/><rect x="2" y="3.4" width="6.2" height="5.7" fill="#00d8f8"/><rect x="8.6" y="3.4" width="6.2" height="5.7" fill="#f8d800"/><rect x="15.2" y="3.4" width="6.2" height="5.7" fill="#00e000"/><rect x="2" y="9.5" width="6.2" height="5.7" fill="#f88000"/><rect x="8.6" y="9.5" width="6.2" height="5.7" fill="#a86000"/><rect x="15.2" y="9.5" width="6.2" height="5.7" fill="#f800f0"/><rect x="2" y="15.6" width="6.2" height="5.7" fill="#0000f0"/><rect x="8.6" y="15.6" width="6.2" height="5.7" fill="#00a828"/><rect x="15.2" y="15.6" width="6.2" height="5.7" fill="#808080"/></svg>
<svg class="ic" style="left:1171px;top:66px;width:24px;height:24px" viewBox="0 0 24 24"><rect x="4.5" y="2" width="15" height="19.5" fill="url(#gDoc)" stroke="#6a7080" stroke-width="1"/><rect x="6" y="3.5" width="12" height="2" fill="#5a9af0"/><rect x="6" y="6.8" width="4" height="1" fill="#f8b030"/><rect x="14" y="6.8" width="4" height="1" fill="#f8b030"/><rect x="6" y="9" width="12" height="1.4" fill="#b8f0a0"/><rect x="8" y="11.5" width="2.6" height="2.6" fill="#00d8f8"/><rect x="11" y="11.5" width="2.6" height="2.6" fill="#f8d800"/><rect x="14" y="11.5" width="2.6" height="2.6" fill="#00e000"/><rect x="8" y="14.5" width="2.6" height="2.6" fill="#f88000"/><rect x="11" y="14.5" width="2.6" height="2.6" fill="#a86000"/><rect x="14" y="14.5" width="2.6" height="2.6" fill="#f800f0"/><rect x="8" y="17.5" width="2.6" height="2.6" fill="#0000f0"/><rect x="11" y="17.5" width="2.6" height="2.6" fill="#00a828"/><rect x="14" y="17.5" width="2.6" height="2.6" fill="#808080"/></svg>
<svg class="ic" style="left:1197px;top:66px;width:24px;height:24px" viewBox="0 0 24 24"><circle cx="12" cy="12" r="9.5" fill="#5fae3e" stroke="#4a7a3a" stroke-width="1"/><path d="M10 14 L8 19 L14 19.5 L13 14z" fill="#c8c0b0"/><path d="M7 17.5 L16.5 6" stroke="#4a86d0" stroke-width="2.4" stroke-linecap="round"/><path d="M8.5 7.5 L17 17.5" stroke="#f0f0f0" stroke-width="2.2" stroke-linecap="round"/><circle cx="8" cy="6.8" r="2.2" fill="none" stroke="#f0f0f0" stroke-width="1.5"/></svg>
<svg class="ic" style="left:1223px;top:66px;width:24px;height:24px" viewBox="0 0 24 24"><rect x="2.5" y="2.5" width="19" height="19" fill="url(#gDoc)" stroke="#4a5470" stroke-width="1.2"/><rect x="3" y="3" width="18" height="3.5" fill="#3a7ac8"/><rect x="7" y="7.5" width="2.2" height="2.2" fill="#9ab820"/><rect x="10.5" y="7.5" width="2.2" height="2.2" fill="#9ab820"/><rect x="14" y="7.5" width="2.2" height="2.2" fill="#9ab820"/><rect x="17.2" y="7.5" width="2.2" height="2.2" fill="#9ab820"/><rect x="4" y="10.5" width="1.6" height="2" fill="#c86a20"/><rect x="4" y="14" width="1.6" height="2" fill="#c86a20"/><rect x="4" y="17.5" width="1.6" height="2" fill="#c86a20"/><path d="M11 20 L18.5 11.5" stroke="#6a9ae0" stroke-width="2" stroke-linecap="round"/><path d="M10 12 L17.5 20" stroke="#b8c0d0" stroke-width="2" stroke-linecap="round"/></svg>
<svg class="ic" style="left:1249px;top:66px;width:24px;height:24px" viewBox="0 0 24 24"><rect x="3" y="3" width="17.5" height="17" fill="none" stroke="#2a4a80" stroke-width="1.6" stroke-dasharray="1.6 2.6"/><path d="M7 10.5 L13 5.5 L20 4.5 L20.5 9.5 L17 10.5 L15.5 13 L12 12.5 L12.5 9.5 L8.5 12z" fill="#d8a050" stroke="#8a5a18" stroke-width=".6"/><circle cx="8" cy="16" r="3.6" fill="#f8e820" stroke="#c8b800" stroke-width=".5"/><path d="M5.8 16h4.4M8 13.8v4.4" stroke="#2a6ae0" stroke-width="1.2"/></svg>
<svg class="ic" style="left:1275px;top:66px;width:24px;height:24px" viewBox="0 0 24 24"><path d="M8 4.5 L21.5 3 L17.5 19 L3 21z" fill="#d04848" stroke="#2a6ae0" stroke-width="1.6" stroke-linejoin="round"/><path d="M6.5 9 L20 7.5 M5.5 13 L19 11.5 M4.5 17 L18 15.5 M11.5 4.2 L7 20.5 M15 3.8 L10.5 20 M18.5 3.4 L14 19.6" stroke="#f0c0c0" stroke-width=".7"/><path d="M11 15 L17 14.3 L16.3 17.5 L10 18.2z" fill="#3a3a4a" opacity=".8"/></svg>
<div id="leftstrip"></div><div id="leftband"></div><div id="leftpanel"></div>
<div class="abs" style="left:0;top:118px;width:60px;height:1px;background:#e8ecf8"></div>
<div class="abs" style="left:59px;top:118px;width:1px;height:882px;background:#e8ecf8"></div>
<div class="hgrip" style="top:121px"></div><div class="hgrip" style="top:374px"></div>
<svg class="ic" style="left:5.5px;top:131.5px;width:24px;height:24px" viewBox="0 0 24 24"><g opacity=".45" transform="translate(0,1)"><use href="#mag"/></g><g opacity=".6" transform="translate(2,3)"><use href="#mag"/></g><ellipse cx="15" cy="20.5" rx="7" ry="1.5" fill="#555" opacity=".35"/><g transform="translate(4.5,5)"><use href="#mag"/></g></svg>
<svg class="ic" style="left:5.5px;top:157.5px;width:24px;height:24px" viewBox="0 0 24 24"><rect x="5" y="7" width="13" height="10" fill="url(#gDoc)" stroke="#888" stroke-width="1.2"/><use href="#gcorner" x="2" y="3"/><use href="#gcorner" x="17" y="3"/><use href="#gcorner" x="2" y="17"/><use href="#gcorner" x="17" y="17"/></svg>
<svg class="ic" style="left:5.5px;top:183.5px;width:24px;height:24px" viewBox="0 0 24 24"><text x="1" y="9.6" font-family="Liberation Sans,sans-serif" font-size="10" fill="#000">±</text><use href="#gcube" x="12.5" y="11"/><g transform="translate(3,3)"><use href="#mag"/></g><path d="M16.5 1.2h6l-3 3.2z" fill="#000"/></svg>
<svg class="ic" style="left:5.5px;top:209.5px;width:24px;height:24px" viewBox="0 0 24 24"><path d="M1 10 L11 4.5 L20 8.5 L20 17.5 L13 21.5 L7 21.5 L1 14.5z" fill="url(#gPlane)" stroke="#aaa" stroke-width=".5"/><path d="M6 14 L14 8.5" stroke="#3ab83a" stroke-width="1.8"/><path d="M12 7.5 L16.5 6.5 L15 10.8z" fill="#5ad84a"/><path d="M6 14 L13 19.5" stroke="#d82020" stroke-width="1.8"/><path d="M11 20.3 L15 21.3 L13.3 17.2z" fill="#e02828"/><path d="M6 13.5 V5" stroke="#1a8af8" stroke-width="2"/><path d="M3.8 6 L6 2.2 L8.2 6z" fill="#1a6af0"/><circle cx="6" cy="14" r="1.6" fill="#fff" stroke="#3a3a20" stroke-width=".8"/><path d="M16.5 1.2h6l-3 3.2z" fill="#000"/></svg>
<svg class="ic" style="left:5.5px;top:235.5px;width:24px;height:24px" viewBox="0 0 24 24"><path d="M3 4.5h9l3 3H6z" fill="#8aa0f0"/><path d="M3 7.5h9l3 3H6z" fill="#f4f4f8" stroke="#9a9aa8" stroke-width=".5"/><path d="M3 10.5h9l3 3H6z" fill="#d8d8de" stroke="#8a8a98" stroke-width=".5"/><ellipse cx="13" cy="17.5" rx="7" ry="4.3" fill="#b48a78" stroke="#7a5a50" stroke-width=".6"/><circle cx="15.5" cy="15.3" r="1.7" fill="#d02020"/><circle cx="10.5" cy="19" r="1.7" fill="#1a50e8"/><circle cx="14.8" cy="19" r="1.7" fill="#18b018"/><path d="M20 5 L13.5 14.5" stroke="#b86a20" stroke-width="1.6" stroke-linecap="round"/><path d="M16.5 1.2h6l-3 3.2z" fill="#000"/></svg>
<svg class="ic" style="left:5.5px;top:261.5px;width:24px;height:24px" viewBox="0 0 24 24"><use href="#refreshB"/><path d="M16.5 1.2h6l-3 3.2z" fill="#000"/></svg>
<svg class="ic" style="left:5.5px;top:287.5px;width:24px;height:24px" viewBox="0 0 24 24"><ellipse cx="12" cy="20.5" rx="8" ry="1.8" fill="#555" opacity=".4"/><text x="12.2" y="20.6" text-anchor="middle" font-family="Liberation Sans,sans-serif" font-size="22" font-weight="bold" fill="#5a84c8" stroke="#3c64a8" stroke-width=".5">?</text><path d="M16.5 1.2h6l-3 3.2z" fill="#000"/></svg>
<svg class="ic" style="left:5.5px;top:313.5px;width:24px;height:24px" viewBox="0 0 24 24"><ellipse cx="13" cy="21" rx="9" ry="1.6" fill="#555" opacity=".4"/><path d="M4.5 7h15l-2 13.5h-11z" fill="#9ac8e8" stroke="#5a7a98" stroke-width=".8"/><ellipse cx="12" cy="7" rx="7.5" ry="2" fill="#c8e0f0" stroke="#5a7a98" stroke-width=".8"/><path d="M10 5.5 L12 2.5 L14 5.5z" fill="#f0e020" stroke="#222" stroke-width=".8"/><path d="M9 11 l6 3 l-6 3 l6 2" stroke="#d8f0b0" stroke-width="1.6" fill="none"/><path d="M16.5 1.2h6l-3 3.2z" fill="#000"/></svg>
<svg class="ic" style="left:5.5px;top:339.5px;width:24px;height:24px" viewBox="0 0 24 24"><rect x="3" y="3" width="3.5" height="14" fill="#8a9098" stroke="#3a3a3a" stroke-width=".6"/><path d="M3 12 L6.5 13.5 V17 L4.8 18.5 L3 17z" fill="#e8c020"/><circle cx="13.5" cy="11.5" r="6" fill="none" stroke="#a04020" stroke-width="1.2"/><path d="M13.5 3.5v16M5.5 11.5h16M8 6l11 11M19 6L8 17" stroke="#a04020" stroke-width=".9"/><circle cx="13.5" cy="11.5" r="1.8" fill="#f8c020"/><path d="M3 18 L9 15 L18 17 L12 21z" fill="#f88a10"/><path d="M5 19.5 l8 -3.5 M8 20.5 l8 -3.5" stroke="#f8d0a0" stroke-width=".7"/><path d="M16.5 1.2h6l-3 3.2z" fill="#000"/></svg>
<svg class="ic" style="left:31.5px;top:131.5px;width:24px;height:24px" viewBox="0 0 24 24"><path d="M3 3.5 L21 20 M8 3.5 L21 15" stroke="#3a7ae0" stroke-width="1.5" stroke-dasharray="3.5 2"/><ellipse cx="12" cy="19" rx="8" ry="1.8" fill="#555" opacity=".45"/><path d="M5.5 18.5 L7 14.5 L17.5 3.5 L20 6 L9.5 17z" fill="#d89a30" stroke="#7a4a10" stroke-width=".7"/><path d="M17.5 3.5 L20 6 L19 7 L16.5 4.5z" fill="#e03030"/><path d="M5.5 18.5 L7 14.5 L9.5 17z" fill="#f0e0c0" stroke="#7a4a10" stroke-width=".5"/><path d="M5.5 18.5 L6.3 16.4 L7.6 17.7z" fill="#222"/><path d="M16.5 1.2h6l-3 3.2z" fill="#000"/></svg>
<svg class="ic" style="left:31.5px;top:157.5px;width:24px;height:24px" viewBox="0 0 24 24"><path d="M9 6.5 C5 2.5 0.5 8 5 12 C9 15 13 9 17 11 C22.5 13.5 18 21.5 12 17" stroke="#3a7ae0" stroke-width="1.6" fill="none"/><ellipse cx="12" cy="19" rx="8" ry="1.8" fill="#555" opacity=".45"/><path d="M5.5 18.5 L7 14.5 L17.5 3.5 L20 6 L9.5 17z" fill="#d89a30" stroke="#7a4a10" stroke-width=".7"/><path d="M17.5 3.5 L20 6 L19 7 L16.5 4.5z" fill="#e03030"/><path d="M5.5 18.5 L7 14.5 L9.5 17z" fill="#f0e0c0" stroke="#7a4a10" stroke-width=".5"/><path d="M5.5 18.5 L6.3 16.4 L7.6 17.7z" fill="#222"/><path d="M16.5 1.2h6l-3 3.2z" fill="#000"/></svg>
<svg class="ic" style="left:31.5px;top:183.5px;width:24px;height:24px" viewBox="0 0 24 24"><path d="M4 4.5h15.5v8.5h-3v7H4z" fill="none" stroke="#f0f000" stroke-width="1.8"/><path d="M7.5 12 L11 16 L17.5 7.5" stroke="#58c83a" stroke-width="3" fill="none" stroke-linecap="round" stroke-linejoin="round"/><path d="M16.5 1.2h6l-3 3.2z" fill="#000"/></svg>
<svg class="ic" style="left:31.5px;top:209.5px;width:24px;height:24px" viewBox="0 0 24 24"><path d="M3 14 C4 0 9 0 12 11 C14.5 21 19 21 21 11" stroke="#3a6ad8" stroke-width="1.6" fill="none"/><ellipse cx="12" cy="19" rx="8" ry="1.8" fill="#555" opacity=".45"/><path d="M5.5 18.5 L7 14.5 L17.5 3.5 L20 6 L9.5 17z" fill="#d89a30" stroke="#7a4a10" stroke-width=".7"/><path d="M17.5 3.5 L20 6 L19 7 L16.5 4.5z" fill="#e03030"/><path d="M5.5 18.5 L7 14.5 L9.5 17z" fill="#f0e0c0" stroke="#7a4a10" stroke-width=".5"/><path d="M5.5 18.5 L6.3 16.4 L7.6 17.7z" fill="#222"/><path d="M16.5 1.2h6l-3 3.2z" fill="#000"/></svg>
<svg class="ic" style="left:31.5px;top:235.5px;width:24px;height:24px" viewBox="0 0 24 24"><path d="M7 6 L21 3.5 L18.5 17 L3.5 20.5z" fill="#8ab8f0" stroke="#2a6ae8" stroke-width="1.6" stroke-linejoin="round"/><path d="M5.5 13 L20 10 M14 5 L11 18.5" stroke="#e8f0ff" stroke-width="1"/><path d="M16.5 1.2h6l-3 3.2z" fill="#000"/></svg>
<svg class="ic" style="left:31.5px;top:261.5px;width:24px;height:24px" viewBox="0 0 24 24"><ellipse cx="14" cy="20" rx="8" ry="1.8" fill="#555" opacity=".4"/><path d="M3 7 L12 3.5 L20.5 6.5 L20.5 16 L11.5 20.5 L3 16.5z" fill="#8a8a86" stroke="#2a2a2a" stroke-width=".8"/><path d="M3 7 L12 3.5 L20.5 6.5 L11.5 10z" fill="#d8d8d4" stroke="#2a2a2a" stroke-width=".7"/><path d="M11.5 10 V20.5" stroke="#2a2a2a" stroke-width=".7"/><path d="M11.5 10 L20.5 6.5 L20.5 16 L11.5 20.5z" fill="#6a6a66"/><path d="M16.5 1.2h6l-3 3.2z" fill="#000"/></svg>
<svg class="ic" style="left:31.5px;top:287.5px;width:24px;height:24px" viewBox="0 0 24 24"><path d="M3.5 6.5v14M20.5 6.5v14" stroke="#3a3a3a" stroke-width="1.4"/><path d="M4.5 8.5h15" stroke="#f0e800" stroke-width="1.8"/><path d="M4 8.5l4-2.5v5z M20 8.5l-4-2.5v5z" fill="#f0e800" stroke="#a8a000" stroke-width=".4"/><path d="M16.5 1.2h6l-3 3.2z" fill="#000"/></svg>
<svg class="ic" style="left:31.5px;top:313.5px;width:24px;height:24px" viewBox="0 0 24 24"><ellipse cx="12" cy="20" rx="8" ry="1.8" fill="#555" opacity=".35"/><path d="M3.5 9.5 L10.5 3.5 L10.5 7 C16.5 7 19.5 11.5 17 17 C16 19 14 20 12.5 20 C15 16.5 14.5 12.5 10.5 12.3 L10.5 15.5z" fill="url(#gArrG)" stroke="#8a8a8a" stroke-width=".6"/><path d="M16.5 1.2h6l-3 3.2z" fill="#000"/></svg>
<svg class="ic" style="left:31.5px;top:339.5px;width:24px;height:24px" viewBox="0 0 24 24"><path d="M5 12 h12 l3.5 3.5 v6 h-15.5z" fill="#e8eef8" stroke="#222" stroke-width="1"/><rect x="7.5" y="17.5" width="7" height="2.5" fill="#fff" stroke="#555" stroke-width=".5"/><path d="M3 6 L8 3.5 L9.5 5 L18 4 L19 15 L4.5 17.5z" fill="url(#gFold)" stroke="#c89838" stroke-width=".6"/><path d="M10 6 L17 5.2 L17.5 10.5 L14.5 10.2 L15 8 L11 8.5z" fill="#28a838"/></svg>
<div id="viewport">
<svg style="position:absolute;left:0;top:0" width="1860" height="892" viewBox="60 109 1860 892">
<defs><linearGradient id="mCyl" x1="0" x2="0" y1="0" y2="1"><stop offset="0" stop-color="#b8b8b8"/><stop offset=".35" stop-color="#ffffff"/><stop offset=".6" stop-color="#f0f0f0"/><stop offset="1" stop-color="#a8a8a8"/></linearGradient><linearGradient id="mGcap" x1="0" x2="0" y1="0" y2="1"><stop offset="0" stop-color="#2c7a2c"/><stop offset=".4" stop-color="#44a044"/><stop offset="1" stop-color="#256a25"/></linearGradient><linearGradient id="mGroll" x1="0" x2="0" y1="0" y2="1"><stop offset="0" stop-color="#3d9a3f"/><stop offset=".45" stop-color="#52b855"/><stop offset="1" stop-color="#174a18"/></linearGradient><linearGradient id="mGv" x1="0" x2="0" y1="0" y2="1"><stop offset="0" stop-color="#236a25"/><stop offset="1" stop-color="#55c058"/></linearGradient><linearGradient id="mGclip" x1="0" x2="0" y1="0" y2="1"><stop offset="0" stop-color="#3aa03c"/><stop offset=".4" stop-color="#58c05a"/><stop offset="1" stop-color="#185a1a"/></linearGradient><linearGradient id="mGflat" x1="0" x2="1" y1="0" y2="0"><stop offset="0" stop-color="#3aa83c"/><stop offset=".35" stop-color="#52b854"/><stop offset="1" stop-color="#1a5a1c"/></linearGradient><linearGradient id="mGcyl2" x1="0" x2="0" y1="0" y2="1"><stop offset="0" stop-color="#0c700c"/><stop offset=".45" stop-color="#2ab82a"/><stop offset="1" stop-color="#0a5a0a"/></linearGradient><linearGradient id="mDisc" x1="0" x2="1" y1="0" y2="0"><stop offset="0" stop-color="#c0c0d4"/><stop offset=".3" stop-color="#e0e0f0"/><stop offset=".7" stop-color="#b0b0c4"/><stop offset="1" stop-color="#606070"/></linearGradient><linearGradient id="mStem" x1="0" x2="1" y1="0" y2="0"><stop offset="0" stop-color="#8a8a8a"/><stop offset=".5" stop-color="#a4a4a4"/><stop offset="1" stop-color="#6a6a6a"/></linearGradient><linearGradient id="mBase" x1="0" x2="0" y1="0" y2="1"><stop offset="0" stop-color="#8a8a8a"/><stop offset=".5" stop-color="#b8b8b8"/><stop offset="1" stop-color="#707070"/></linearGradient><linearGradient id="mPole" x1="0" x2="1" y1="0" y2="0"><stop offset="0" stop-color="#b8b8cc"/><stop offset=".4" stop-color="#e4e4f0"/><stop offset="1" stop-color="#a8a8c0"/></linearGradient><linearGradient id="mWm" x1="0" x2="0" y1="0" y2="1"><stop offset="0" stop-color="#f4a020"/><stop offset="1" stop-color="#e86a18"/></linearGradient></defs>
<polygon points="697,109 702.5,109 700.3,174 694,174" fill="url(#mPole)"/>
<rect x="694" y="174" width="8" height="9" fill="#d0d0e0" stroke="#000" stroke-width="0.8"/>
<polygon points="834,109 857,109 857,122.5 834,120.5" fill="#e68a0e"/>
<polygon points="857,109 975,109 975,128.5 857,123" fill="#3a8a3a"/>
<polygon points="975,109 1004,109 1003,125.5 975,128.5" fill="#1b3d1b"/>
<path d="M988.5 109L989.5 127" stroke="#000" stroke-width="0.8" fill="none"/>
<polygon points="1082,171 1111.5,171 1109,228 1082,228" fill="#050505"/>
<rect x="1085" y="183.5" width="7.5" height="20" fill="#6e6e6e"/>
<rect x="1099.6" y="182" width="9.2" height="19" fill="#6e6e6e"/>
<rect x="1088" y="174" width="4" height="13" fill="#3a3e3a"/>
<rect x="1102.6" y="172" width="3.4" height="14" fill="#3a3e3a"/>
<rect x="1096" y="172" width="2" height="34" fill="#3c3c3c"/>
<rect x="1107" y="172" width="2" height="7" fill="#9a9a9a"/>
<rect x="1097.5" y="171" width="6.5" height="1.5" fill="#8a8a8a"/>
<rect x="1084" y="208" width="8" height="1.2" fill="#4a4a4a"/>
<rect x="1101" y="206" width="7" height="1.2" fill="#4a4a4a"/>
<rect x="1084" y="214.5" width="6" height="1.1" fill="#4a4a4a"/>
<rect x="1098" y="212" width="8" height="1.2" fill="#4a4a4a"/>
<polygon points="1082,220 1093,218.6 1093,226 1082,227.6" fill="#505058"/>
<polygon points="1095,218.6 1106,217.6 1106,225 1095,226" fill="#505058"/>
<polygon points="746,117.5 757,115.5 1098,132 1085,133.5" fill="#7c847a" stroke="#000" stroke-width="0.6" stroke-linejoin="round"/>
<polygon points="746,117.5 1085,133.5 1082.5,176 1065,182.5 772,168.8 772.7,159.4 744.4,158" fill="#8c948a"/>
<polygon points="1085,133.5 1098,132.3 1096,173 1082.5,174" fill="#3a3e3a" stroke="#000" stroke-width="0.6" stroke-linejoin="round"/>
<polygon points="772.5,169.2 1064.5,184 1063.5,203.2 771.5,188.8" fill="#e8e8e8"/>
<polygon points="788,212.5 808,212.5 808,228 788,226.8" fill="url(#mGcap)"/>
<polygon points="808,212 935,212 935,232.5 808,227.6" fill="url(#mCyl)"/>
<polygon points="935,212.6 955.6,213.3 955.6,233.8 935,232.5" fill="url(#mGcap)" stroke="#000" stroke-width="0.5" stroke-linejoin="round"/>
<polygon points="955.6,215 960,212.5 960,216.5 956,221" fill="#2f8a32"/>
<polygon points="663,186.5 677,184.2 742,185 744,190 772,190 1070,205 1070,217.5 912,210.5 890,209.8 890,219 684,208.4 664,201" fill="#000"/>
<polygon points="675,188.3 742,191.7 742,193.5 675,190.5" fill="#c6c6dc"/>
<polygon points="675,195 742,198 742,200 675,197" fill="#c6c6dc"/>
<polygon points="772,193 800,195 960,201.6 1068,208 1068,210 960,204.2 800,197.2 772,195.4" fill="#c6c6dc"/>
<polygon points="772,199.6 800,200.8 960,207.8 1068,214.2 1068,216.6 960,210.4 800,203.3 772,201.8" fill="#c6c6dc"/>
<polygon points="684,200.4 890,210 890,218.2 684,207.5" fill="#c6c6dc"/>
<rect x="699" y="187" width="2" height="1" fill="#e0e0f0"/><rect x="708" y="185.5" width="2" height="1" fill="#e0e0f0"/><rect x="719" y="188.5" width="2" height="1" fill="#e0e0f0"/><rect x="728" y="186.5" width="2" height="1" fill="#e0e0f0"/><rect x="739" y="189.5" width="2" height="1" fill="#e0e0f0"/>
<polygon points="772.5,170.4 1064.5,184.4 1063.5,202.8 771.5,188.6" fill="#e8e8e8"/>
<path d="M771.5 190.2L1063.5 204.6" stroke="#000" stroke-width="3" fill="none"/>
<path d="M776 190.6L1063.5 204.8" stroke="#8a1010" stroke-width="1.1" fill="none" stroke-dasharray="9 11"/>
<path d="M772.5 169.6L1064.5 183.8" stroke="#000" stroke-width="1.6" fill="none"/>
<path d="M780 169.9L1064.5 183.8" stroke="#8a1010" stroke-width="1.1" fill="none" stroke-dasharray="9 11"/>
<polygon points="869.4,164.75 956.5,168.75 956,182.8 869.4,178.8" fill="#8c948a" stroke="#000" stroke-width="1" stroke-linejoin="round"/>
<polygon points="744,158 772.7,159.4 770.6,201.9 742.5,200.6" fill="#808080" stroke="#000" stroke-width="1" stroke-linejoin="round"/>
<circle cx="757.8" cy="197" r="1.8" fill="#000"/><circle cx="766.2" cy="197.2" r="1.6" fill="#000"/>
<polygon points="1065.6,173.5 1082,173.5 1080,205.6 1063.75,205.6" fill="#808080" stroke="#000" stroke-width="0.8" stroke-linejoin="round"/>
<polygon points="688.8,208 711,208 703,378 681,378" fill="#000"/><polygon points="690.576,208 691.464,208 683.64,378 682.76,378" fill="#c6c6dc"/><polygon points="696.57,208 699.678,208 691.78,378 688.7,378" fill="#c6c6dc"/><polygon points="701.676,208 709.89,208 701.9,378 693.76,378" fill="#c6c6dc"/>
<polygon points="912.5,231 923.3,231 918,332 908,332" fill="#000"/><polygon points="912.5,231 915.416,231 910.7,332 908,332" fill="#c6c6dc"/><polygon points="918.764,231 920.924,231 915.8,332 913.8,332" fill="#c6c6dc"/>
<polygon points="679,408 905,418 905,477 676,468" fill="#8888a4"/>
<polygon points="692.5,414.5 697,415 695,467 690.5,467" fill="#c4b80a" stroke="#000" stroke-width="0.8" stroke-linejoin="round"/><polygon points="697,415 715.6,416 714.1,468 695,467" fill="#1a2448" stroke="#000" stroke-width="0.8" stroke-linejoin="round"/>
<polygon points="698,436 714.5,436.8 714.3,443.8 697.8,443" fill="#c6c6dc"/>
<polygon points="698,446 714.5,446.8 714.3,449.8 697.8,449" fill="#c6c6dc"/>
<polygon points="698,452 714.5,452.8 714.3,455.8 697.8,455" fill="#c6c6dc"/>
<polygon points="741.8,417 746.3,417.5 744.3,470 739.8,470" fill="#c4b80a" stroke="#000" stroke-width="0.8" stroke-linejoin="round"/><polygon points="746.3,417.5 764,418.5 762.5,471 744.3,470" fill="#1a2448" stroke="#000" stroke-width="0.8" stroke-linejoin="round"/><polygon points="748,434 763,434.8 761.5,471 746.5,470" fill="#8c948a" stroke="#000" stroke-width="0.6" stroke-linejoin="round"/>
<polygon points="790.6,420 795,420.3 794,436.5 789.6,436.2" fill="#c4b80a" stroke="#000" stroke-width="0.8" stroke-linejoin="round"/>
<polygon points="795,420.3 813.8,421.2 813,437.5 794,436.5" fill="#1a2448" stroke="#000" stroke-width="0.8" stroke-linejoin="round"/>
<polygon points="789.5,436.5 812.5,437.6 811,473.5 788,472.5" fill="#8c948a" stroke="#000" stroke-width="0.6" stroke-linejoin="round"/>
<polygon points="839.5,422 844,422.5 842,475 837.5,475" fill="#c4b80a" stroke="#000" stroke-width="0.8" stroke-linejoin="round"/><polygon points="844,422.5 862.5,423.5 861,476 842,475" fill="#1a2448" stroke="#000" stroke-width="0.8" stroke-linejoin="round"/>
<polygon points="845,430 861.5,430.6 861.4,432.6 844.9,432" fill="#c6c6dc"/>
<polygon points="845,435 861.5,435.6 861.4,437.6 844.9,437" fill="#c6c6dc"/>
<polygon points="845,440 861.5,440.6 861.4,442.6 844.9,442" fill="#c6c6dc"/>
<polygon points="845,445 861.5,445.6 861.4,447.6 844.9,447" fill="#c6c6dc"/>
<polygon points="845,450 861.5,450.6 861.4,452.6 844.9,452" fill="#c6c6dc"/>
<polygon points="845,455 861.5,455.6 861.4,457.6 844.9,457" fill="#c6c6dc"/>
<polygon points="845,460 861.5,460.6 861.4,462.6 844.9,462" fill="#c6c6dc"/>
<polygon points="845,465 861.5,465.6 861.4,467.6 844.9,467" fill="#c6c6dc"/>
<polygon points="845,470 861.5,470.6 861.4,472.6 844.9,472" fill="#c6c6dc"/>
<polygon points="852.3,423 858,423.3 856.8,470 851,469.7" fill="#f010e0"/>
<polygon points="858,425.5 862,425.7 861.6,440 857.6,439.8" fill="#3aa040" stroke="#000" stroke-width="0.5" stroke-linejoin="round"/>
<rect x="849" y="470" width="10" height="5" fill="#c4b80a"/>
<circle cx="727.5" cy="424" r="1.8" fill="#000"/>
<circle cx="825.5" cy="428.5" r="1.8" fill="#000"/>
<circle cx="884" cy="441" r="1.8" fill="#000"/>
<polygon points="682,401 905,411 905,418.5 680,408.5" fill="#000"/>
<polygon points="682,401.6 905,411.4 905,413 682,403.2" fill="#d8b0a8"/>
<polygon points="688.8,404.8 905,414.6 905,418.2 688.8,408.4" fill="#4a0a8a"/>
<polygon points="696,378 905,387 905,405 704,394" fill="#000"/>
<polygon points="697,380.2 905,389 905,403.2 707.5,392.6" fill="#c6c6dc"/>
<path d="M697 378.6L905 387.6" stroke="#e8e8f0" stroke-width="1" fill="none" stroke-dasharray="9 12"/>
<polygon points="705,392.8 905,402.6 936,405.2 940,411.5 905,411 702,400.6" fill="#000"/>
<polygon points="707,393.8 905,403.6 931,405.8 936,411 905,410.2 703,399.8" fill="#43a047"/>
<path d="M742.5 359.4 L732 349.8 L706 350 C692 352 685 364 685.2 376 C685.6 389 692 398.5 703 400.3 L707.5 393 C699 390 694.6 384 694.8 375.5 C695 367 700 360.5 708 360 L725 359.8z" fill="#43a047" stroke="#000" stroke-width="1" stroke-linejoin="round"/>
<rect x="680" y="393" width="8" height="7.5" fill="#8a8a8a" stroke="#000" stroke-width="0.5"/>
<rect x="672.5" y="434" width="5.5" height="10" fill="#555" stroke="#000" stroke-width="0.5"/>
<rect x="678.5" y="381" width="2.5" height="6" fill="#9aa09a" stroke="#000" stroke-width="0.5"/>
<rect x="836" y="369" width="2.2" height="14" fill="#2f8a32"/>
<rect x="862.5" y="370" width="2.2" height="14" fill="#2f8a32"/>
<rect x="868" y="360" width="2.2" height="14" fill="#2f8a32"/>
<rect x="865" y="374.5" width="8" height="9" fill="#e8e8f0" stroke="#000" stroke-width="0.8"/>
<polygon points="903,374 976,377.5 976,392 903,390" fill="#000"/>
<polygon points="905,376 975,379 975,382.6 905,380" fill="#c6c6dc"/>
<polygon points="905,382.5 990,386 990,391 905,389" fill="#8c8c8c"/>
<rect x="911" y="382.5" width="2" height="7" fill="#2aa02a"/>
<rect x="951" y="382.5" width="2" height="7" fill="#2aa02a"/>
<rect x="972" y="382.5" width="2" height="7" fill="#2aa02a"/>
<rect x="916" y="383.5" width="11" height="2.5" fill="#e8e8f0"/>
<polygon points="903,388 1058.5,394.5 1058.5,424 903,418.5" fill="#000"/>
<polygon points="904.5,390.5 1057.5,396.5 1057.5,413 904.5,403.5" fill="#c6c6dc"/>
<polygon points="904.5,404 927,405 933,410.5 904.5,410.5" fill="#43a047" stroke="#000" stroke-width="0.6" stroke-linejoin="round"/>
<polygon points="940,410 1057,415.5 1057,417 940,411.8" fill="#c6c6dc"/>
<polygon points="903,414.2 1057,419.2 1057,423.6 903,418" fill="#4a0a8a"/>
<polygon points="1030,388 1059,389 1059,392 1030,391" fill="#c6c6dc"/>
<polygon points="1074,390 1081,390 1081,393 1074,393" fill="#c6c6dc"/>
<polygon points="905.6,355 917.5,328.8 922,329 922,375 905.6,374" fill="#d01010" stroke="#000" stroke-width="0.6" stroke-linejoin="round"/>
<rect x="906" y="358" width="11" height="10" fill="#8a8a8a" stroke="#000" stroke-width="0.5"/>
<polygon points="917.5,329 922,329 921.8,375 917.5,375" fill="#a89a50" stroke="#000" stroke-width="0.5" stroke-linejoin="round"/>
<rect x="922" y="332.5" width="22" height="38" fill="#9a9a9a" stroke="#000" stroke-width="0.8"/>
<rect x="934" y="341" width="4" height="21" fill="#222"/>
<circle cx="934" cy="354" r="3" fill="none" stroke="#333" stroke-width=".8"/><circle cx="924" cy="340" r="1.5" fill="#000"/><circle cx="928" cy="366" r="1.8" fill="#000"/>
<rect x="928.8" y="302.5" width="13.2" height="18.5" fill="#a89a50" stroke="#000" stroke-width="0.6"/>
<rect x="933" y="306" width="14.5" height="9.5" fill="#e4e4f0" stroke="#000" stroke-width="0.5"/>
<rect x="925.6" y="320.6" width="19.4" height="10.2" fill="#1f5a22" stroke="#000" stroke-width="0.6"/>
<rect x="927" y="323" width="16" height="3" fill="#2f8a32"/>
<polygon points="938.8,261 960,261.5 960,272.5 938.8,272" fill="#1f5a22" stroke="#000" stroke-width="0.8" stroke-linejoin="round"/>
<rect x="941" y="263" width="16" height="3" fill="#2f8a32"/>
<polygon points="942,272 958.5,272.5 956,306 942.5,306" fill="url(#mGv)" stroke="#000" stroke-width="0.6" stroke-linejoin="round"/>
<path d="M960 281 L959 250 C959 232 973 217 992 217 C1010 217 1023.8 231 1023.8 250 L1019 356 L1016 384 L1006 384 L1009 356 L1012 250 C1012 237 1003 227.5 992 227.5 C980 227.5 971 237 971 250 L971 267z" fill="#43a047" stroke="#000" stroke-width="1" stroke-linejoin="round"/>
<polygon points="959.5,281 963.5,277 963,303 960,303" fill="#43a047" stroke="#000" stroke-width="0.5" stroke-linejoin="round"/>
<rect x="973.5" y="244" width="30" height="87" fill="#000"/>
<rect x="975" y="246" width="3.5" height="85" fill="#c6c6dc"/>
<rect x="998.5" y="246" width="3.5" height="85" fill="#c6c6dc"/>
<rect x="979" y="250" width="19" height="80" fill="#d01010"/>
<rect x="980" y="245" width="17" height="5" fill="#8a8a8a" stroke="#000" stroke-width="0.5"/>
<rect x="980" y="271" width="17" height="5" fill="#8a8a8a" stroke="#000" stroke-width="0.5"/>
<rect x="973.5" y="270" width="30" height="2" fill="#000"/>
<rect x="993" y="239" width="5" height="5" fill="#9a9a9a" stroke="#000" stroke-width="0.4"/>
<rect x="982" y="258" width="8" height="2.2" fill="#300"/>
<rect x="982" y="263" width="11" height="2.2" fill="#300"/>
<rect x="982" y="268" width="8" height="2.2" fill="#300"/>
<rect x="982" y="283" width="11" height="2.2" fill="#300"/>
<rect x="982" y="288" width="8" height="2.2" fill="#300"/>
<rect x="982" y="294" width="8" height="2.2" fill="#300"/>
<rect x="982" y="300" width="8" height="2.2" fill="#300"/>
<rect x="1005" y="283" width="7" height="29" fill="#8c8c8c"/>
<polygon points="1022.5,283.8 1033.8,284.5 1033,313 1022.5,312.5" fill="#808080" stroke="#000" stroke-width="0.6" stroke-linejoin="round"/>
<path d="M1025 307l2 2 2-2z" fill="#222"/>
<polygon points="945,308.8 967.5,309.5 966,376 943.8,376" fill="url(#mGroll)" stroke="#000" stroke-width="0.6" stroke-linejoin="round"/>
<polygon points="967.5,308 983,308.6 982.5,318.8 967.5,318.2" fill="#1f4a22" stroke="#000" stroke-width="0.5" stroke-linejoin="round"/>
<rect x="969" y="331" width="29" height="13.5" fill="#8c8c8c" stroke="#000" stroke-width="0.6"/>
<rect x="967.5" y="345" width="35.5" height="38" fill="#7ad07a" stroke="#000" stroke-width="0.6"/>
<rect x="971" y="348" width="2.5" height="30" fill="#1f8a22"/>
<rect x="990" y="350" width="2.5" height="30" fill="#1f8a22"/>
<rect x="977" y="371" width="13" height="12" fill="#90d890" stroke="#000" stroke-width="0.5"/>
<rect x="998" y="346" width="7" height="44" fill="#222"/>
<rect x="999.5" y="350" width="2.5" height="38" fill="#c6c6dc"/>
<polygon points="1017.5,334 1030,336 1030,382 1017.5,382" fill="#43a047" stroke="#000" stroke-width="0.6" stroke-linejoin="round"/>
<polygon points="1005,356 1017,350 1017,390 1008,392" fill="#3f9a43" stroke="#000" stroke-width="0.5" stroke-linejoin="round"/>
<polygon points="1012,384 1026,380 1026,392 1008,392" fill="#8a8a8a" stroke="#000" stroke-width="0.5" stroke-linejoin="round"/>
<circle cx="1043.8" cy="370" r="4" fill="#8a1010"/>
<polygon points="1088,327 1097,330 1097,333 1088,333" fill="#43a047" stroke="#000" stroke-width="0.4" stroke-linejoin="round"/>
<polygon points="1087,354 1096,351 1096,357 1087,357" fill="#43a047" stroke="#000" stroke-width="0.4" stroke-linejoin="round"/>
<rect x="884.5" y="333" width="3.5" height="39" fill="#3aa040" stroke="#000" stroke-width="0.6"/>
<polygon points="903,422 1058,427 1058,500 903,496" fill="#10141c"/>
<polygon points="905,424 953,426 953,438 905,437" fill="#8888a4"/>
<rect x="905" y="428" width="6" height="9" fill="#c6c6dc"/>
<rect x="926" y="427" width="11" height="10" fill="#c6c6dc"/>
<polygon points="990,428 1050,430 1050,444 990,442" fill="#c6c6dc"/>
<rect x="1020" y="428" width="8" height="12" fill="#808080" stroke="#000" stroke-width="0.5"/>
<rect x="938" y="428" width="7" height="10" fill="#808080" stroke="#000" stroke-width="0.5"/>
<rect x="940.5" y="433" width="1.3" height="4" fill="#f08a10"/>
<rect x="1023.5" y="437" width="1.5" height="5" fill="#f08a10"/>
<rect x="953.8" y="425" width="12.2" height="14" fill="#808080" stroke="#000" stroke-width="0.6"/>
<rect x="968" y="427" width="12" height="12" fill="#c6c6dc"/>
<path d="M953.8 419.5 L972 420.5 C984 422 989.5 428 989 436 C988.5 443 984 448 978 449.5 L975 446 C980.5 444.5 984 440 984 435 C984 429 979 425.5 971 425 L953.8 424.5z" fill="#808080" stroke="#000" stroke-width=".6"/>
<polygon points="1052,426 1057,426 1056,494 1049.5,494" fill="#f0b050" stroke="#000" stroke-width="0.5" stroke-linejoin="round"/>
<rect x="905" y="460" width="7" height="32" fill="#c6c6dc"/>
<rect x="916" y="462" width="4" height="28" fill="#c6c6dc"/>
<rect x="910" y="458" width="14" height="20" fill="#8888a4"/>
<rect x="924" y="464" width="4" height="26" fill="#c4b80a"/>
<rect x="929" y="460" width="3" height="32" fill="#c6c6dc"/>
<rect x="944" y="460" width="8" height="26" fill="#8888a4"/>
<rect x="952" y="474" width="3" height="14" fill="#c4b80a"/>
<rect x="947" y="467" width="39" height="3" fill="#9a9ab0"/>
<rect x="950" y="473" width="35" height="2" fill="#c6c6dc"/>
<rect x="966" y="476" width="6" height="6" fill="#8a8a8a"/>
<rect x="993" y="460" width="3" height="34" fill="#c6c6dc"/>
<rect x="1003" y="458" width="3" height="34" fill="#c6c6dc"/>
<rect x="1009" y="460" width="2" height="32" fill="#c6c6dc"/>
<rect x="1013" y="466" width="21" height="12" fill="#6a6a6a"/>
<rect x="1015" y="482" width="11" height="5" fill="#d0d0e0"/>
<rect x="1028" y="480" width="6" height="7" fill="#707070"/>
<rect x="1036" y="468" width="12" height="3" fill="#c6c6dc"/>
<path d="M968 484L968 492" stroke="#e01010" stroke-width="1.2" fill="none"/>
<rect x="936" y="487" width="5" height="2" fill="#f010e0"/>
<rect x="940" y="488" width="4" height="2" fill="#20e0f0"/>
<polygon points="1067,388 1080,389 1080,392 1067,391" fill="#c6c6dc"/>
<rect x="1035.5" y="472" width="13.5" height="21" fill="#1f2c4c"/>
<polygon points="662.8,186 674,186 660.4,488 649,488" fill="#000"/><polygon points="664.144,186 666.272,186 652.534,488 650.368,488" fill="#c6c6dc"/><polygon points="669.856,186 671.984,186 658.348,488 656.182,488" fill="#c6c6dc"/>
<polygon points="673.6,200 683.6,200 670.6,488 660,488" fill="#000"/><polygon points="674,200 682.2,200 669.116,488 660.424,488" fill="#c6c6dc"/>
<circle cx="678" cy="222" r="1.1" fill="#000"/><circle cx="678" cy="230" r="1.1" fill="#000"/><circle cx="706.5" cy="219" r="1.1" fill="#000"/><circle cx="706" cy="228" r="1.1" fill="#000"/><circle cx="667" cy="443" r="1.1" fill="#000"/><circle cx="667" cy="452" r="1.1" fill="#000"/>
<polygon points="890.4,210 912.5,210 903.8,492 880,492" fill="#000"/><polygon points="890.4,210 899.019,210 889.282,492 880,492" fill="#c6c6dc"/><polygon points="901.671,210 903.66,210 894.28,492 892.138,492" fill="#c6c6dc"/><polygon points="907.417,210 909.406,210 900.468,492 898.326,492" fill="#c6c6dc"/>
<polygon points="1069.5,207 1081.5,207 1068.5,506 1056.5,506" fill="#000"/><polygon points="1070.94,207 1073.46,207 1060.46,506 1057.94,506" fill="#c6c6dc"/><polygon points="1076.7,207 1079.7,207 1066.7,506 1063.7,506" fill="#c6c6dc"/>
<polygon points="1087.5,228 1109,228 1098.5,456 1079,456" fill="#000"/><polygon points="1088.79,228 1090.08,228 1081.34,456 1080.17,456" fill="#c6c6dc"/><polygon points="1093.95,228 1095.67,228 1086.41,456 1084.85,456" fill="#c6c6dc"/><polygon points="1099.54,228 1100.83,228 1091.09,456 1089.92,456" fill="#c6c6dc"/><polygon points="1104.27,228 1105.99,228 1095.77,456 1094.21,456" fill="#c6c6dc"/>
<polygon points="1074,400 1081,400 1079.5,455.5 1072.6,455.5" fill="#c6c6dc" stroke="#000" stroke-width="0.6" stroke-linejoin="round"/>
<polygon points="1074,388 1081,388 1081,393 1074,393" fill="#c6c6dc" stroke="#000" stroke-width="0.5" stroke-linejoin="round"/>
<polygon points="1070.5,456 1096.5,454 1096,478 1070,478" fill="#050505"/>
<polygon points="1071,457.5 1082,456.5 1082,465 1071,466" fill="#505058"/>
<polygon points="1084,456.4 1095.5,455.4 1095.5,464 1084,465" fill="#505058"/>
<rect x="1071" y="469" width="23" height="1" fill="#3a3a3a"/>
<rect x="1071" y="474.5" width="19" height="1" fill="#3a3a3a"/>
<rect x="1093" y="468" width="2" height="2" fill="#d0d0e0"/>
<polygon points="1084.6,478 1089.2,478 1088.2,503 1083.6,503" fill="#000"/><polygon points="1085.75,478 1088.05,478 1087.05,503 1084.75,503" fill="#c6c6dc"/>
<polygon points="1091,478 1095.6,478 1094.6,503 1090,503" fill="#000"/><polygon points="1092.15,478 1094.45,478 1093.45,503 1091.15,503" fill="#c6c6dc"/>
<polygon points="883,437.5 932,440 993,443.6 993,449 995,449 995,459.5 930,456.5 930,452 883,455.5" fill="#f2f2f2" stroke="#000" stroke-width="0.8" stroke-linejoin="round"/>
<polygon points="893,444 940,446 980,448.6 976,451 930,449.6 893,448.6" fill="#8a8a8a" stroke="#000" stroke-width="0.5" stroke-linejoin="round"/>
<polygon points="930,451 994,454 994,455.6 930,452.6" fill="#000"/>
<ellipse cx="959" cy="455" rx="3.4" ry="1.4" fill="#f0c020"/>
<polygon points="980,453 992,453.6 992,459 980,458.4" fill="#f8f8f8" stroke="#000" stroke-width="0.6" stroke-linejoin="round"/>
<rect x="996" y="446" width="56" height="3" fill="#808080"/>
<rect x="996" y="452" width="54" height="3.5" fill="#c6c6dc"/>
<rect x="996" y="458" width="52" height="3" fill="#c6c6dc"/>
<rect x="1000" y="464" width="46" height="3" fill="#c6c6dc"/>
<rect x="1016" y="452" width="18" height="7" fill="#707070"/>
<path d="M1041 447L1044 456" stroke="#20e0f0" stroke-width="1.5" fill="none"/>
<polygon points="659,474 905,485 905,500 659,489" fill="#000"/>
<polygon points="670.6,467.5 905,478.5 905,486.5 670.6,475.2" fill="#c6c6dc" stroke="#000" stroke-width="0.5" stroke-linejoin="round"/>
<polygon points="661,477 905,488.5 905,490.3 661,478.8" fill="#c6c6dc"/>
<polygon points="661,482.5 905,494 905,496 661,484.5" fill="#c6c6dc"/>
<polygon points="647.8,487 905,499.6 923,502 923,508 880,503.5 648,491.6" fill="#8a8a8a"/>
<polygon points="998,492 1058,494.5 1058,506 998,504" fill="#000"/>
<polygon points="1001,494.4 1055,497 1055,499.6 1001,497" fill="#c6c6dc"/>
<polygon points="1001,501 1055,503 1055,505 1001,503" fill="#c6c6dc"/>
<polygon points="993,491 1000,491 1000,511 993,511" fill="#3a3a3a"/>
<polygon points="998.8,505 1065,507 1102.5,502.5 1102.5,507.5 1065,511 998.8,509.5" fill="#555" stroke="#000" stroke-width="0.4" stroke-linejoin="round"/>
<polygon points="1065,507 1102.5,502.5 1102.5,507.5 1065,511" fill="#3a3a3a"/>
<polygon points="908.8,490.6 924,491 917,508 901,507" fill="#9a9ab0" stroke="#000" stroke-width="0.6" stroke-linejoin="round"/>
<polygon points="924,491 929,491.5 921,509 917,508" fill="#d0d0e0" stroke="#000" stroke-width="0.5" stroke-linejoin="round"/>
<rect x="945" y="491.5" width="15" height="7.5" fill="#18a018" stroke="#000" stroke-width="0.5"/>
<rect x="965" y="493" width="7" height="7" fill="#18a018" stroke="#000" stroke-width="0.5"/>
<rect x="973" y="493" width="7" height="7" fill="#9a9a9a" stroke="#000" stroke-width="0.4"/>
<rect x="980" y="493" width="4" height="7" fill="#18a018"/>
<polygon points="990,492 993,492 984,514 981,514" fill="#c8c8dc" stroke="#000" stroke-width="0.5" stroke-linejoin="round"/>
<polygon points="930,498.8 985,502.5 980,512.8 923,510" fill="#086a08" stroke="#000" stroke-width="0.6" stroke-linejoin="round"/>
<polygon points="955,518 1037,520 1052,519.5 1045,524 1023.8,524" fill="#3a3a3a"/>
<polygon points="1023.8,523 1045,520 1044,561 1022.5,564" fill="#2e2e2e" stroke="#000" stroke-width="0.6" stroke-linejoin="round"/>
<polygon points="933.8,523.8 1023.8,523 1022.5,563.8 932.5,558.8" fill="#8a8a8a" stroke="#000" stroke-width="0.8" stroke-linejoin="round"/>
<polygon points="923,510 980,512.8 978,524.5 923,522.5" fill="url(#mGcyl2)" stroke="#000" stroke-width="0.5" stroke-linejoin="round"/>
<polygon points="928,538 955,539 955,545 928,543.5" fill="#8a8a8a" stroke="#000" stroke-width="0.6" stroke-linejoin="round"/>
<path d="M955 524L955 545" stroke="#000" stroke-width="1" fill="none"/>
<polygon points="907,530 924,531 924,544 907,543" fill="#e0e0ea" stroke="#000" stroke-width="0.5" stroke-linejoin="round"/>
<polygon points="904,512 922,513 922,530 904,528" fill="#5a5a5a"/>
<g opacity=".92"><path d="M891 518v21h12M895 513v23h10M899 508v25h8" stroke="url(#mWm)" stroke-width="1.6" fill="none"/><path d="M936 518v21h-12M932 513v23h-10M928 508v25h-8" stroke="url(#mWm)" stroke-width="1.6" fill="none"/><path d="M913 511 C902 514 901 527 910 531 C906 525 908 518 913 516z" fill="url(#mWm)"/><path d="M915 512 L915 535 C922 532 924 523 918 518z" fill="url(#mWm)"/><path d="M906 537 L921 537 L917 540 L910 540z" fill="#f07818"/><text x="947" y="529" font-family="Liberation Sans,Noto Sans CJK SC,sans-serif" font-size="16.4" fill="#f08a28" stroke="#f08a28" stroke-width=".5" textLength="82" lengthAdjust="spacingAndGlyphs">智造资料网</text><text x="947.5" y="538.3" font-family="Liberation Sans,sans-serif" font-size="4.6" font-weight="bold" fill="#f08a28" textLength="81.5" lengthAdjust="spacingAndGlyphs">INTELLIGENT MANUFACTURING DATA</text></g>
<polygon points="706.2,526.2 714,524.6 840.6,529.4 829.4,531.2" fill="#2a2a34" stroke="#000" stroke-width="0.6" stroke-linejoin="round"/>
<polygon points="829.4,531.2 840.6,530.6 838.8,581.2 827.5,582" fill="#30303a" stroke="#000" stroke-width="0.8" stroke-linejoin="round"/>
<polygon points="706.2,526.2 829.4,531.2 827.5,582 703.8,576.2" fill="#8a8aa0" stroke="#000" stroke-width="0.9" stroke-linejoin="round"/>
<rect x="693.8" y="547.5" width="10.6" height="5.5" fill="#d0d0e0" stroke="#000" stroke-width="0.6"/>
<rect x="830.6" y="554" width="10.4" height="5.4" fill="#d0d0e0" stroke="#000" stroke-width="0.6"/>
<rect x="841" y="553" width="7" height="5.6" fill="#d0d0e0" stroke="#000" stroke-width="0.6"/>
<polygon points="651.3,605 655.3,605 655.3,607 661.9,605.5 661.9,621 660.9,639 656.8,641 656.8,638 650.3,641 650.3,622" fill="#000"/><polygon points="653.5,608 658.3,607 657.3,637 652.1,638" fill="url(#mGclip)"/><rect x="659.5" y="625" width="1" height="7" fill="#1f6a22"/>
<polygon points="664.3,603 668.3,603 668.3,605 674.9,603.5 674.9,619 673.9,637 669.8,639 669.8,636 663.3,639 663.3,620" fill="#000"/><polygon points="666.5,606 671.3,605 670.3,635 665.1,636" fill="url(#mGclip)"/><rect x="672.5" y="623" width="1" height="7" fill="#1f6a22"/>
<polygon points="1063.5,625 1067.5,625 1067.5,627 1074.1,625.5 1074.1,641 1073.1,659 1069,661 1069,658 1062.5,661 1062.5,642" fill="#000"/><polygon points="1065.7,628 1070.5,627 1069.5,657 1064.3,658" fill="url(#mGclip)"/><rect x="1071.7" y="645" width="1" height="7" fill="#1f6a22"/>
<polygon points="1071,623 1075,623 1075,625 1081.6,623.5 1081.6,639 1080.6,658 1076.5,660 1076.5,657 1070,660 1070,640" fill="#000"/><polygon points="1073.2,626 1078,625 1077,656 1071.8,657" fill="url(#mGclip)"/><rect x="1079.2" y="643" width="1" height="7" fill="#1f6a22"/>
<polygon points="1077.5,622.5 1081.5,622.5 1081.5,624.5 1088.1,623 1088.1,638.5 1087.1,657.5 1083,659.5 1083,656.5 1076.5,659.5 1076.5,639.5" fill="#000"/><polygon points="1079.7,625.5 1084.5,624.5 1083.5,655.5 1078.3,656.5" fill="url(#mGclip)"/><rect x="1085.7" y="642.5" width="1" height="7" fill="#1f6a22"/>
<g transform="translate(687,744)"><rect x="8.8" y="8" width="5.8" height="32" fill="url(#mStem)"/><path d="M0 0.5h23.8v8.3H0z" fill="#000"/><rect x="0.8" y="1.6" width="22.6" height="6" fill="url(#mDisc)"/><rect x="6" y="22" width="10.6" height="5.6" fill="#000"/><rect x="7.2" y="23.2" width="2" height="3.2" fill="#9a9a9a"/><rect x="10" y="23.2" width="3.4" height="3.2" fill="#8a8a8a"/><rect x="14.2" y="23.2" width="1.6" height="3.2" fill="#555"/><rect x="5" y="36" width="10.6" height="4.6" fill="#000"/><rect x="6.2" y="37" width="2" height="2.6" fill="#9a9a9a"/><rect x="9" y="37" width="3.6" height="2.6" fill="#8a8a8a"/><path d="M3 41 C5 39.5 16 39.5 18.5 41 L20.5 44 L21.5 47.5 L-1 46.5 L1.5 43.5z" fill="url(#mBase)"/><path d="M1 43.8h11M-1 46.3h9.5M8.5 47.2h13" stroke="#000" stroke-width="1"/></g>
<g transform="translate(672.8,746.2)"><rect x="8.8" y="8" width="5.8" height="32" fill="url(#mStem)"/><path d="M0 0.5h23.8v8.3H0z" fill="#000"/><rect x="0.8" y="1.6" width="22.6" height="6" fill="url(#mDisc)"/><rect x="6" y="22" width="10.6" height="5.6" fill="#000"/><rect x="7.2" y="23.2" width="2" height="3.2" fill="#9a9a9a"/><rect x="10" y="23.2" width="3.4" height="3.2" fill="#8a8a8a"/><rect x="14.2" y="23.2" width="1.6" height="3.2" fill="#555"/><rect x="5" y="36" width="10.6" height="4.6" fill="#000"/><rect x="6.2" y="37" width="2" height="2.6" fill="#9a9a9a"/><rect x="9" y="37" width="3.6" height="2.6" fill="#8a8a8a"/><path d="M3 41 C5 39.5 16 39.5 18.5 41 L20.5 44 L21.5 47.5 L-1 46.5 L1.5 43.5z" fill="url(#mBase)"/><path d="M1 43.8h11M-1 46.3h9.5M8.5 47.2h13" stroke="#000" stroke-width="1"/></g>
<g transform="translate(654,748)"><rect x="8.8" y="8" width="5.8" height="32" fill="url(#mStem)"/><path d="M0 0.5h23.8v8.3H0z" fill="#000"/><rect x="0.8" y="1.6" width="22.6" height="6" fill="url(#mDisc)"/><rect x="6" y="22" width="10.6" height="5.6" fill="#000"/><rect x="7.2" y="23.2" width="2" height="3.2" fill="#9a9a9a"/><rect x="10" y="23.2" width="3.4" height="3.2" fill="#8a8a8a"/><rect x="14.2" y="23.2" width="1.6" height="3.2" fill="#555"/><rect x="5" y="36" width="10.6" height="4.6" fill="#000"/><rect x="6.2" y="37" width="2" height="2.6" fill="#9a9a9a"/><rect x="9" y="37" width="3.6" height="2.6" fill="#8a8a8a"/><path d="M3 41 C5 39.5 16 39.5 18.5 41 L20.5 44 L21.5 47.5 L-1 46.5 L1.5 43.5z" fill="url(#mBase)"/><path d="M1 43.8h11M-1 46.3h9.5M8.5 47.2h13" stroke="#000" stroke-width="1"/></g>
<g transform="translate(1048,764.3)"><rect x="8.8" y="8" width="5.8" height="32" fill="url(#mStem)"/><path d="M0 0.5h23.8v8.3H0z" fill="#000"/><rect x="0.8" y="1.6" width="22.6" height="6" fill="url(#mDisc)"/><rect x="6" y="22" width="10.6" height="5.6" fill="#000"/><rect x="7.2" y="23.2" width="2" height="3.2" fill="#9a9a9a"/><rect x="10" y="23.2" width="3.4" height="3.2" fill="#8a8a8a"/><rect x="14.2" y="23.2" width="1.6" height="3.2" fill="#555"/><rect x="5" y="36" width="10.6" height="4.6" fill="#000"/><rect x="6.2" y="37" width="2" height="2.6" fill="#9a9a9a"/><rect x="9" y="37" width="3.6" height="2.6" fill="#8a8a8a"/><path d="M3 41 C5 39.5 16 39.5 18.5 41 L20.5 44 L21.5 47.5 L-1 46.5 L1.5 43.5z" fill="url(#mBase)"/><path d="M1 43.8h11M-1 46.3h9.5M8.5 47.2h13" stroke="#000" stroke-width="1"/></g>
<g transform="translate(1033.5,764)"><rect x="8.8" y="8" width="5.8" height="32" fill="url(#mStem)"/><path d="M0 0.5h23.8v8.3H0z" fill="#000"/><rect x="0.8" y="1.6" width="22.6" height="6" fill="url(#mDisc)"/><rect x="6" y="22" width="10.6" height="5.6" fill="#000"/><rect x="7.2" y="23.2" width="2" height="3.2" fill="#9a9a9a"/><rect x="10" y="23.2" width="3.4" height="3.2" fill="#8a8a8a"/><rect x="14.2" y="23.2" width="1.6" height="3.2" fill="#555"/><rect x="5" y="36" width="10.6" height="4.6" fill="#000"/><rect x="6.2" y="37" width="2" height="2.6" fill="#9a9a9a"/><rect x="9" y="37" width="3.6" height="2.6" fill="#8a8a8a"/><path d="M3 41 C5 39.5 16 39.5 18.5 41 L20.5 44 L21.5 47.5 L-1 46.5 L1.5 43.5z" fill="url(#mBase)"/><path d="M1 43.8h11M-1 46.3h9.5M8.5 47.2h13" stroke="#000" stroke-width="1"/></g>
<g transform="translate(1014.6,766)"><rect x="8.8" y="8" width="5.8" height="32" fill="url(#mStem)"/><path d="M0 0.5h23.8v8.3H0z" fill="#000"/><rect x="0.8" y="1.6" width="22.6" height="6" fill="url(#mDisc)"/><rect x="6" y="22" width="10.6" height="5.6" fill="#000"/><rect x="7.2" y="23.2" width="2" height="3.2" fill="#9a9a9a"/><rect x="10" y="23.2" width="3.4" height="3.2" fill="#8a8a8a"/><rect x="14.2" y="23.2" width="1.6" height="3.2" fill="#555"/><rect x="5" y="36" width="10.6" height="4.6" fill="#000"/><rect x="6.2" y="37" width="2" height="2.6" fill="#9a9a9a"/><rect x="9" y="37" width="3.6" height="2.6" fill="#8a8a8a"/><path d="M3 41 C5 39.5 16 39.5 18.5 41 L20.5 44 L21.5 47.5 L-1 46.5 L1.5 43.5z" fill="url(#mBase)"/><path d="M1 43.8h11M-1 46.3h9.5M8.5 47.2h13" stroke="#000" stroke-width="1"/></g>
<polygon points="954,762 978,762.6 978,764 993,764.5 992,767 992,772.5 976,772.6 964,771 954,770.6 957,767" fill="#000"/>
<polygon points="958,764 989,765.6 989,770.4 959,769.6" fill="url(#mGflat)"/>
<rect x="850.5" y="753" width="24.5" height="24" fill="#40567e"/>
<path d="M851 758v-5h5.5M869.5 753h3.5c1.5 0 2 .6 2 2v3.5M875 771.5v3.5c0 1.5-.6 2-2 2h-3.5M856.5 777.5H851v-5.5M860.5 753h3.5M875 762.5v4M860.5 777.5h3.5" stroke="#e0e0d8" stroke-width="1" fill="none"/>
<polygon points="861.3,764 863,724.5 865.6,724.5 864.2,764" fill="#14a028"/>
<polygon points="859.8,724.8 864.4,714.5 868.4,724.8" fill="#18a830"/>
<polygon points="837,762.6 860,763.4 860,766 837,765.2" fill="#b02838"/>
<polygon points="827,763.6 837.5,759.4 837.5,768.2" fill="#b02838"/>
<polygon points="865,760.5 872,760.5 872,769.5 865,769.5" fill="#20c0d0"/>
<text x="864.6" y="769.4" font-family="Liberation Sans,sans-serif" font-size="12.5" font-weight="bold" fill="#f01818">Z</text>
<circle cx="860.8" cy="764.8" r="3.2" fill="#6a7484"/><circle cx="859.8" cy="763.8" r="1.2" fill="#9aa4b4"/>
<text x="815.4" y="768.2" font-family="Liberation Sans,sans-serif" font-size="12.5" fill="#ff1010">X</text>
<text x="859.6" y="713" font-family="Liberation Sans,sans-serif" font-size="12.5" fill="#e4e4e4">Y</text>
<polygon points="95.5,915.5 111,915.5 111,916.5 120.5,916.5 120.5,939.5 94.5,939.5 94.5,932 95.5,932" fill="#7a8a5c"/>
<path d="M120 916.6 H111 V915.4 H95.5 V932 H94.5 V937" stroke="#f8f000" stroke-width="1.2" fill="none"/>
<path d="M123.6 916L123.6 938" stroke="#e8e8e8" stroke-width="1" fill="none"/>
<polygon points="119.3,940 120.5,901 123,901 122,940" fill="#00d800"/>
<polygon points="118,901.8 122.2,891 126,901.8" fill="#00e000"/>
<polygon points="95,939 117,939 117,943.4 95,943.4" fill="#f00000"/>
<polygon points="85,940.5 95.2,936.6 95.2,945" fill="#f00000"/>
<text x="122.6" y="946.2" font-family="Liberation Sans,sans-serif" font-size="12" font-weight="bold" fill="#10e8f0">Z</text>
<path d="M123 946h6M124 937h5" stroke="#f01010" stroke-width=".8" stroke-dasharray="2 1.4" fill="none"/>
<circle cx="119.8" cy="942" r="3.6" fill="#7a7a7a"/><circle cx="118.6" cy="940.8" r="1.4" fill="#b0b0b0"/>
<text x="73.6" y="944.2" font-family="Liberation Sans,sans-serif" font-size="12.5" fill="#ff1010">X</text>
<text x="117.6" y="890" font-family="Liberation Sans,sans-serif" font-size="12.5" fill="#e4e4e4">Y</text>
</svg>
</div>
<div class="vb" style="left:64px;top:113px"><svg width="24" height="24" viewBox="0 0 24 24" style="position:absolute;left:0px;top:0px"><rect x="3.5" y="4" width="17" height="3.6" rx=".8" fill="#44598a"/><rect x="3.5" y="10.2" width="17" height="3.6" rx=".8" fill="#44598a"/><rect x="3.5" y="16.3" width="17" height="3.6" rx=".8" fill="#44598a"/></svg></div>
<div class="vb" style="left:92px;top:113px"><svg width="24" height="24" viewBox="0 0 24 24" style="position:absolute;left:0px;top:0px"><rect x="6.5" y="8" width="11.5" height="9" fill="url(#gDoc)" stroke="#555" stroke-width="1"/><use href="#gcorner" x="3" y="4"/><use href="#gcorner" x="17.5" y="4"/><use href="#gcorner" x="3" y="17.5"/><use href="#gcorner" x="17.5" y="17.5"/></svg></div>
<div class="vb" style="left:120px;top:113px"><svg width="24" height="24" viewBox="0 0 24 24" style="position:absolute;left:0px;top:0px"><g opacity=".5" transform="translate(1,2)"><use href="#mag"/></g><g opacity=".6" transform="translate(3,4)"><use href="#mag"/></g><g transform="translate(5.5,6)"><use href="#mag"/></g></svg></div>
<div class="vb" style="left:148px;top:113px"><svg width="24" height="24" viewBox="0 0 24 24" style="position:absolute;left:0px;top:0px"><path d="M2.5 14.5 L14 5 L21.5 9.5 M2.5 14.5 L12 22 L21.5 20" stroke="#6a6a6a" stroke-width=".6" fill="none"/><path d="M11 14.5 L19 9" stroke="#3ab83a" stroke-width="1.8"/><path d="M17 7.5 L21.5 7 L19.5 11.2z" fill="#5ad84a"/><path d="M11 14.5 L18 20.5" stroke="#d82020" stroke-width="1.8"/><path d="M15.8 21 L20 22 L18.5 18z" fill="#e02828"/><path d="M11 14 V6" stroke="#1a8af8" stroke-width="2.2"/><path d="M8.6 7 L11 3 L13.4 7z" fill="#1a8af8"/><circle cx="11" cy="14.5" r="1.7" fill="#fff" stroke="#3a3a20" stroke-width=".8"/></svg></div>
<div class="vb" style="left:176px;top:113px"><svg width="24" height="24" viewBox="0 0 24 24" style="position:absolute;left:0px;top:0px"><polygon points="12.3,3.3 21.6,6.5 12.3,10.5 3.4,6.5" fill="url(#gGrn2)"/><path d="M12.3 3.3 L21.6 6.5 V16 L12.3 21.3 L3.4 16 V6.5z M3.4 6.5 L12.3 10.5 L21.6 6.5 M12.3 10.5 V21.3 M12.3 3.3 V12.2 L3.4 16 M12.3 12.2 L21.6 16" stroke="#000" stroke-width="1.3" fill="none" stroke-linejoin="round"/></svg></div>
<div class="vb" style="left:204px;top:113px"><svg width="24" height="24" viewBox="0 0 24 24" style="position:absolute;left:0px;top:0px"><polygon points="12.3,12.2 21.6,16 12.3,21.3 3.4,16" fill="url(#gGrn2)"/><path d="M12.3 3.3 L21.6 6.5 V16 L12.3 21.3 L3.4 16 V6.5z M3.4 6.5 L12.3 10.5 L21.6 6.5 M12.3 10.5 V21.3 M12.3 3.3 V12.2 L3.4 16 M12.3 12.2 L21.6 16" stroke="#000" stroke-width="1.3" fill="none" stroke-linejoin="round"/></svg></div>
<div class="vb" style="left:232px;top:113px"><svg width="24" height="24" viewBox="0 0 24 24" style="position:absolute;left:0px;top:0px"><polygon points="3.4,6.5 12.3,3.3 12.3,12.2 3.4,16" fill="url(#gGrn2)"/><path d="M12.3 3.3 L21.6 6.5 V16 L12.3 21.3 L3.4 16 V6.5z M3.4 6.5 L12.3 10.5 L21.6 6.5 M12.3 10.5 V21.3 M12.3 3.3 V12.2 L3.4 16 M12.3 12.2 L21.6 16" stroke="#000" stroke-width="1.3" fill="none" stroke-linejoin="round"/></svg></div>
<div class="vb" style="left:260px;top:113px"><svg width="24" height="24" viewBox="0 0 24 24" style="position:absolute;left:0px;top:0px"><polygon points="12.3,10.5 21.6,6.5 21.6,16 12.3,21.3" fill="url(#gGrn2)"/><path d="M12.3 3.3 L21.6 6.5 V16 L12.3 21.3 L3.4 16 V6.5z M3.4 6.5 L12.3 10.5 L21.6 6.5 M12.3 10.5 V21.3 M12.3 3.3 V12.2 L3.4 16 M12.3 12.2 L21.6 16" stroke="#000" stroke-width="1.3" fill="none" stroke-linejoin="round"/></svg></div>
<div class="vb" style="left:288px;top:113px"><svg width="24" height="24" viewBox="0 0 24 24" style="position:absolute;left:0px;top:0px"><polygon points="3.4,6.5 12.3,10.5 12.3,21.3 3.4,16" fill="url(#gGrn2)"/><path d="M12.3 3.3 L21.6 6.5 V16 L12.3 21.3 L3.4 16 V6.5z M3.4 6.5 L12.3 10.5 L21.6 6.5 M12.3 10.5 V21.3 M12.3 3.3 V12.2 L3.4 16 M12.3 12.2 L21.6 16" stroke="#000" stroke-width="1.3" fill="none" stroke-linejoin="round"/></svg></div>
<div class="vb" style="left:316px;top:113px"><svg width="24" height="24" viewBox="0 0 24 24" style="position:absolute;left:0px;top:0px"><polygon points="12.3,3.3 21.6,6.5 21.6,16 12.3,12.2" fill="url(#gGrn2)"/><path d="M12.3 3.3 L21.6 6.5 V16 L12.3 21.3 L3.4 16 V6.5z M3.4 6.5 L12.3 10.5 L21.6 6.5 M12.3 10.5 V21.3 M12.3 3.3 V12.2 L3.4 16 M12.3 12.2 L21.6 16" stroke="#000" stroke-width="1.3" fill="none" stroke-linejoin="round"/></svg></div>
<div class="vb" style="left:344px;top:113px"><svg width="24" height="24" viewBox="0 0 24 24" style="position:absolute;left:0px;top:0px"><polygon points="12.3,3.3 21.6,6.5 12.3,10.5 3.4,6.5" fill="#4fd83a"/><polygon points="3.4,6.5 12.3,10.5 12.3,21.3 3.4,16" fill="#2cb41c"/><polygon points="12.3,10.5 21.6,6.5 21.6,16 12.3,21.3" fill="url(#gGrn2)"/><path d="M12.3 3.3 L21.6 6.5 V16 L12.3 21.3 L3.4 16 V6.5z M3.4 6.5 L12.3 10.5 L21.6 6.5 M12.3 10.5 V21.3" stroke="#1a9a10" stroke-width="1.2" fill="none" stroke-linejoin="round"/></svg></div>
<div class="vb" style="left:64px;top:141px"><svg width="24" height="24" viewBox="0 0 24 24" style="position:absolute;left:0px;top:0px"><path d="M8.5 6.5 V18.5 A5.0 2.5 0 0 0 18.5 18.5 V6.5 A5.0 2.5 0 0 0 8.5 6.5z" fill="none" stroke="#222" stroke-width="0.9"/><ellipse cx="13.5" cy="6.5" rx="5.0" ry="2.5" fill="none" stroke="#222" stroke-width="0.9"/><path d="M8.5 18.5 A5.0 2.5 0 0 1 18.5 18.5" fill="none" stroke="#222" stroke-width="0.7200000000000001"/></svg></div>
<div class="vb" style="left:64px;top:169px"><svg width="24" height="24" viewBox="0 0 24 24" style="position:absolute;left:0px;top:0px"><path d="M8.5 6.5 V18.5 A5.0 2.5 0 0 0 18.5 18.5 V6.5 A5.0 2.5 0 0 0 8.5 6.5z" fill="none" stroke="#222" stroke-width="0.9"/><ellipse cx="13.5" cy="6.5" rx="5.0" ry="2.5" fill="none" stroke="#222" stroke-width="0.9"/></svg></div>
<div class="vb on" style="left:64px;top:197px"><svg width="24" height="24" viewBox="0 0 24 24" style="position:absolute;left:-1px;top:-1px"><ellipse cx="18.5" cy="20.3" rx="6" ry="1.6" fill="#555" opacity=".45"/><path d="M8.5 6.5 V18.5 A5.0 2.5 0 0 0 18.5 18.5 V6.5 A5.0 2.5 0 0 0 8.5 6.5z" fill="url(#gCylB)" stroke="#101828" stroke-width="1"/><ellipse cx="13.5" cy="6.5" rx="5.0" ry="2.5" fill="#5a8fe0" stroke="#101828" stroke-width="1"/></svg></div>
<div class="vb" style="left:64px;top:225px"><svg width="24" height="24" viewBox="0 0 24 24" style="position:absolute;left:0px;top:0px"><ellipse cx="18.5" cy="20.3" rx="6" ry="1.6" fill="#555" opacity=".45"/><path d="M8.5 6.5 V18.5 A5.0 2.5 0 0 0 18.5 18.5 V6.5 A5.0 2.5 0 0 0 8.5 6.5z" fill="url(#gCylW)" stroke="#3a3e4a" stroke-width="0.9"/><ellipse cx="13.5" cy="6.5" rx="5.0" ry="2.5" fill="#d8e4f8" stroke="#3a3e4a" stroke-width="0.9"/><path d="M8.5 18.5 A5.0 2.5 0 0 1 18.5 18.5" fill="none" stroke="#a0a8c0" stroke-width="0.7200000000000001"/></svg></div>
<div class="vb" style="left:64px;top:253px"><svg width="24" height="24" viewBox="0 0 24 24" style="position:absolute;left:0px;top:0px"><path d="M8.5 6.5 V18.5 A5.0 2.5 0 0 0 18.5 18.5 V6.5 A5.0 2.5 0 0 0 8.5 6.5z" fill="none" stroke="#111" stroke-width="1"/><ellipse cx="13.5" cy="6.5" rx="5.0" ry="2.5" fill="none" stroke="#111" stroke-width="1"/><path d="M7 7 C6.5 11 7.5 15 7 19 M9.5 8.5 C10.5 12 9 15 10 20.5 M12.5 9 C11.5 13 13.5 16 12.5 20.5 M15 8.5 C16 12 14 16 15.3 20 M17.2 7 C17.8 11 16.5 15 17.2 19" stroke="#222" stroke-width="0.9" fill="none"/></svg></div>
<div id="status"><div class="line"></div></div>
<div id="taskbar"></div>
<div class="abs" style="left:48px;top:1040px;width:344px;height:8px;background:#f2f2f2;border-top:1px solid #b5b5b5"></div>
<div class="abs" style="left:589px;top:1040px;width:49px;height:8px;background:#4a4a4a"></div>
<div class="abs" style="left:638px;top:1040px;width:48px;height:8px;background:#b5601e"></div>
<div class="abs" style="left:1336px;top:1003px;width:5px;height:17px;background:repeating-conic-gradient(#b8bcc8 0 25%,#e8ecf6 0 50%) 0 0/2px 2px"></div>
<div class="abs" style="left:1341px;top:1003px;width:131px;height:18px;background:#fff"></div>
<div class="abs" style="left:1472px;top:1003px;width:5px;height:17px;background:repeating-conic-gradient(#b8bcc8 0 25%,#e8ecf6 0 50%) 0 0/2px 2px"></div>
<div class="st" style="left:1486px;top:1005px">绝对 XY 上视图</div>
<div class="vsep" style="left:1592px;top:1004px;height:15px"></div>
<div class="st" style="left:1601px;top:1005px">绝对视图</div>
<div class="abs" style="left:1657px;top:1003px;width:5px;height:17px;background:repeating-conic-gradient(#b8bcc8 0 25%,#e8ecf6 0 50%) 0 0/2px 2px"></div>
<div class="st" id="layer" style="left:1668px;top:1005px;font-weight:bold;font-size:12px">LAYER0</div>
<div class="vsep" style="left:1726px;top:1004px;height:15px"></div>
<div class="vsep" style="left:1757px;top:1004px;height:15px"></div>
<div class="vsep" style="left:1800px;top:1004px;height:15px"></div>
<div class="vsep" style="left:1843px;top:1004px;height:15px"></div>
<div class="vsep" style="left:1886px;top:1004px;height:15px"></div>
<div class="abs" style="left:1762px;top:1005px;width:32px;height:12px;background:#44608c"></div>
<div class="abs" style="left:1805px;top:1005px;width:32px;height:12px;background:#44608c"></div>
<div class="abs" style="left:1848px;top:1005px;width:32px;height:12px;background:#44608c"></div>
<svg class="abs" style="left:1893px;top:1002px;width:16px;height:16px" viewBox="0 0 16 16"><circle cx="8" cy="7.8" r="6.6" fill="#1a3ad0" stroke="#0a1a50" stroke-width=".8"/><path d="M3.5 5 C5 2.5 8 2 9.5 3.5 C10 5.5 8 6 7.5 8 C7 10 5.5 10.5 4.5 12 C2.5 10 2.3 7 3.5 5z" fill="#28c028"/><path d="M10.5 7.5 C12 6.5 13.5 7.5 13.8 9 C13 11.5 11.5 12.5 10 12.8 C9.5 11 9.5 9 10.5 7.5z" fill="#28c028"/><circle cx="6" cy="5" r="1.3" fill="#a8f0a8" opacity=".8"/></svg>
<div class="vsep" style="left:1132px;top:1023px;height:15px"></div>
<div class="vsep" style="left:1175px;top:1023px;height:15px"></div>
<div class="vsep" style="left:1206px;top:1023px;height:15px"></div>
<div class="vsep" style="left:1237px;top:1023px;height:15px"></div>
<div class="vsep" style="left:1268px;top:1023px;height:15px"></div>
<div class="vsep" style="left:1299px;top:1023px;height:15px"></div>
<div class="vsep" style="left:1330px;top:1023px;height:15px"></div>
<div class="vsep" style="left:1361px;top:1023px;height:15px"></div>
<div class="vsep" style="left:1392px;top:1023px;height:15px"></div>
<div class="vsep" style="left:1423px;top:1023px;height:15px"></div>
<div class="vsep" style="left:1454px;top:1023px;height:15px"></div>
<div class="vsep" style="left:1580px;top:1023px;height:15px"></div>
<div class="vsep" style="left:1654px;top:1023px;height:15px"></div>
<div class="st" style="left:1141px;top:1025px">拴牢</div>
<svg class="abs" style="left:1181px;top:1021px;width:18px;height:18px" viewBox="0 0 18 18"><rect x="1" y="1" width="16" height="16" fill="#e8c8d0" stroke="#8a8a9a" stroke-width="1.4"/><path d="M4 7.5 C5.5 3.5 11 3 13 6 L14.5 4.5 L14.5 9 L10 8.5 L11.5 7.2 C10 5.5 7 5.8 6 8z" fill="#e04050"/><path d="M14 10.5 C12.5 14.5 7 15 5 12 L3.5 13.5 L3.5 9 L8 9.5 L6.5 10.8 C8 12.5 11 12.2 12 10z" fill="#e04050"/></svg>
<div class="abs" style="left:1212px;top:1021px;width:18px;height:18px;background:#ffe680;border:1px solid #f0cc60"></div><svg class="abs" style="left:1212px;top:1021px;width:18px;height:18px" viewBox="0 0 18 18"><path d="M7 6 L14.5 12.5 L12.5 13 L14 16.5 L12.5 17 L11 13.8 L9 15z" fill="#e8e0f8" stroke="#6a6a8a" stroke-width=".8"/><path d="M6.5 0.5 L7.5 4 L11 2.5 L9 5.8 L12.5 7 L8.5 7.8 L8 11.5 L6 8.5 L2.5 10 L4.5 6.8 L1 5 L5 4.5z" fill="#d040d0" opacity=".85"/><circle cx="6.5" cy="6" r="1.6" fill="#f8d030"/></svg>
<svg class="abs" style="left:1243px;top:1021px;width:18px;height:18px" viewBox="0 0 18 18"><path d="M3 8.5 L9 3 L16 2.5 L16.5 7 L13 8 L11.5 10 L8 9.5 L8.5 7.5 L5 10z" fill="#e0a858" stroke="#8a5a18" stroke-width=".6"/><rect x="4" y="10" width="9" height="7.5" fill="#f0f4ff" stroke="#3a6ad0" stroke-width=".8"/><path d="M4 13.7h9M8.5 10v7.5" stroke="#3a6ad0" stroke-width=".7"/><rect x="5" y="14.5" width="2.5" height="2" fill="#3a6ad0"/><rect x="9.5" y="14.5" width="2.5" height="2" fill="#3a6ad0"/></svg>
<svg class="abs" style="left:1274px;top:1021px;width:18px;height:18px" viewBox="0 0 18 18"><ellipse cx="9.5" cy="16.5" rx="6.5" ry="1.3" fill="#555" opacity=".4"/><text x="9.4" y="16" text-anchor="middle" font-family="Liberation Sans,sans-serif" font-size="18.5" font-weight="bold" fill="#4a7ac8" stroke="#2c5aa8" stroke-width=".4">?</text></svg>
<svg class="abs" style="left:1305px;top:1021px;width:18px;height:18px" viewBox="0 0 18 18"><path d="M3 3.5 L7 1.5 L11 3 L11 8 L7 10 L3 8z" fill="#4a8ae8" stroke="#1a3a90" stroke-width=".7"/><path d="M3 3.5 L7 5 L11 3 M7 5 V10" stroke="#1a3a90" stroke-width=".6" fill="none"/><path d="M8.5 9.5 L12.5 7.5 L16.5 9 L16.5 14 L12.5 16.5 L8.5 14.5z" fill="#8a9aa8" stroke="#1a2a30" stroke-width=".8"/><path d="M8.5 9.5 L12.5 11 L16.5 9 M12.5 11 V16.5" stroke="#1a2a30" stroke-width=".7" fill="none"/><path d="M1 12.5 H8 M5 9.5 L8.5 12.5 L5 15.5" stroke="#e81010" stroke-width="1.5" fill="none"/></svg>
<div class="abs" style="left:1336px;top:1021px;width:18px;height:18px;background:#ffe680;border:1px solid #f0cc60"></div><svg class="abs" style="left:1336px;top:1021px;width:18px;height:18px" viewBox="0 0 18 18"><path d="M2.5 5.5 L9 3 L15.5 5.5 L15.5 13 L9 16.5 L2.5 13z" fill="#8ab0b8" stroke="#1a3ac0" stroke-width="1.1"/><path d="M2.5 5.5 L9 3 L15.5 5.5 L9 8z" fill="#e040e0" stroke="#a010a0" stroke-width=".6"/><path d="M9 8 V16.5" stroke="#1a3ac0" stroke-width="1"/></svg>
<svg class="abs" style="left:1367px;top:1021px;width:18px;height:18px" viewBox="0 0 18 18"><rect x="3.5" y="4" width="11" height="12" fill="#e8ecf4" stroke="#6a6a6a" stroke-width="1.2"/><path d="M3.5 12.5h11" stroke="#6a6a6a" stroke-width="1"/></svg>
<svg class="abs" style="left:1398px;top:1021px;width:18px;height:18px" viewBox="0 0 18 18"><circle cx="9" cy="8" r="7" fill="#f4f8f4" stroke="#2a9a2a" stroke-width="1.6"/><path d="M9 4v5M6.5 7l2.5 3 2.5-3" stroke="#1a3a8a" stroke-width="1.2" fill="none"/></svg>
<svg class="abs" style="left:1429px;top:1021px;width:18px;height:18px" viewBox="0 0 18 18"><rect x="2" y="3" width="14" height="13" fill="#e8ecf4" stroke="#6a6a7a" stroke-width="1.2"/><path d="M9 3v13" stroke="#6a6a7a" stroke-width="1"/></svg>
<div class="st" id="lsps" style="left:1463px;top:1025px;font-size:13px">LS: 1.00 PS: 1.00</div>
<div class="st" style="left:1589px;top:1025px">单位: 毫米</div>
<div class="st" id="coords" style="left:1663px;top:1025px;font-size:13px;letter-spacing:-0.05px">X = 0136.571 Y = 2245.242 Z = 0000.000</div>
<div class="abs" style="left:1368px;top:1009px;width:198px;height:24px;background:#fff;border:1px solid #d4d8e0;border-radius:3px;box-shadow:0 0 2px rgba(0,0,0,.25)"></div>
<svg class="abs" style="left:1356px;top:1004px;width:34px;height:32px" viewBox="0 0 34 32"><g transform="rotate(-12 17 16)"><rect x="4.5" y="4" width="25" height="24" rx="5" fill="#f2571d"/><text x="17" y="24.5" text-anchor="middle" font-family="Liberation Sans,sans-serif" font-weight="bold" font-style="italic" font-size="24" fill="#fff" transform="translate(17 0) scale(1.15 1) translate(-17 0)">S</text></g></svg>
<div class="abs" style="left:1392px;top:1013px;width:16px;height:16px;line-height:16px;font-size:15px;font-weight:bold;color:#1c7be3;font-family:'Liberation Sans','Noto Sans CJK SC',sans-serif">中</div>
<svg class="abs" style="left:1414px;top:1010px;width:150px;height:22px" viewBox="0 0 150 22" fill="none" stroke="#1c7be3"><circle cx="4.5" cy="7" r="1.6" stroke-width="1.2"/><path d="M10.5 9.5 c1 .3 1.3 1.6 -.8 3.6" stroke-width="1.8" stroke-linecap="round"/><circle cx="30" cy="10.8" r="7" stroke-width="1.5"/><path d="M27.5 8v2.2M32.5 8v2.2" stroke-width="1.5" stroke-linecap="round"/><path d="M26.3 12.8 c2 2.6 5.4 2.6 7.4 0" stroke-width="1.4" stroke-linecap="round"/><rect x="49.6" y="2.5" width="5" height="10.5" rx="2.5" fill="#1c7be3" stroke="none"/><path d="M47 9.5 c0 7 10.2 7 10.2 0 M52.1 15v3.2" stroke-width="1.5" stroke-linecap="round"/><rect x="66" y="5.5" width="16" height="10.5" rx="1.5" fill="#1c7be3" stroke="none"/><path d="M68.5 8.5h11M68.5 10.8h11" stroke="#fff" stroke-width="1.2" stroke-dasharray="1.4 1"/><path d="M70.5 13.5h7" stroke="#fff" stroke-width="1.2"/><circle cx="97" cy="6.5" r="3.2" fill="#b8bcc4" stroke="none"/><path d="M90.5 16.5 c0-7 13-7 13 0z" fill="#b8bcc4" stroke="none"/><circle cx="103" cy="15" r="3.2" fill="#d0d4dc" stroke="none"/><path d="M111.5 5.2 l3.3 -1.5 c1.4 1.4 3.8 1.4 5.2 0 l3.3 1.5 l1.8 3.8 l-2.8 1.4 l-.8 -1.4 v7.6 h-8.6 v-7.6 l-.8 1.4 l-2.8 -1.4z" fill="#1c7be3" stroke="none"/><rect x="133.5" y="5" width="5.4" height="5.4" fill="#1c7be3" stroke="none"/><rect x="140.5" y="5.6" width="4.6" height="4.6" stroke-width="1.2"/><rect x="133.5" y="12" width="5.4" height="5.4" fill="#1c7be3" stroke="none"/><rect x="140.2" y="12" width="5.4" height="5.4" fill="#1c7be3" stroke="none"/></svg>
<div class="abs" style="left:1818px;top:1044px;width:24px;height:4px;overflow:hidden;color:#fff;font-size:12px;line-height:12px">0:20</div>
<div class="abs" style="left:1916px;top:1040px;width:1px;height:8px;background:#6a6a6a"></div>
</body>
</html>
